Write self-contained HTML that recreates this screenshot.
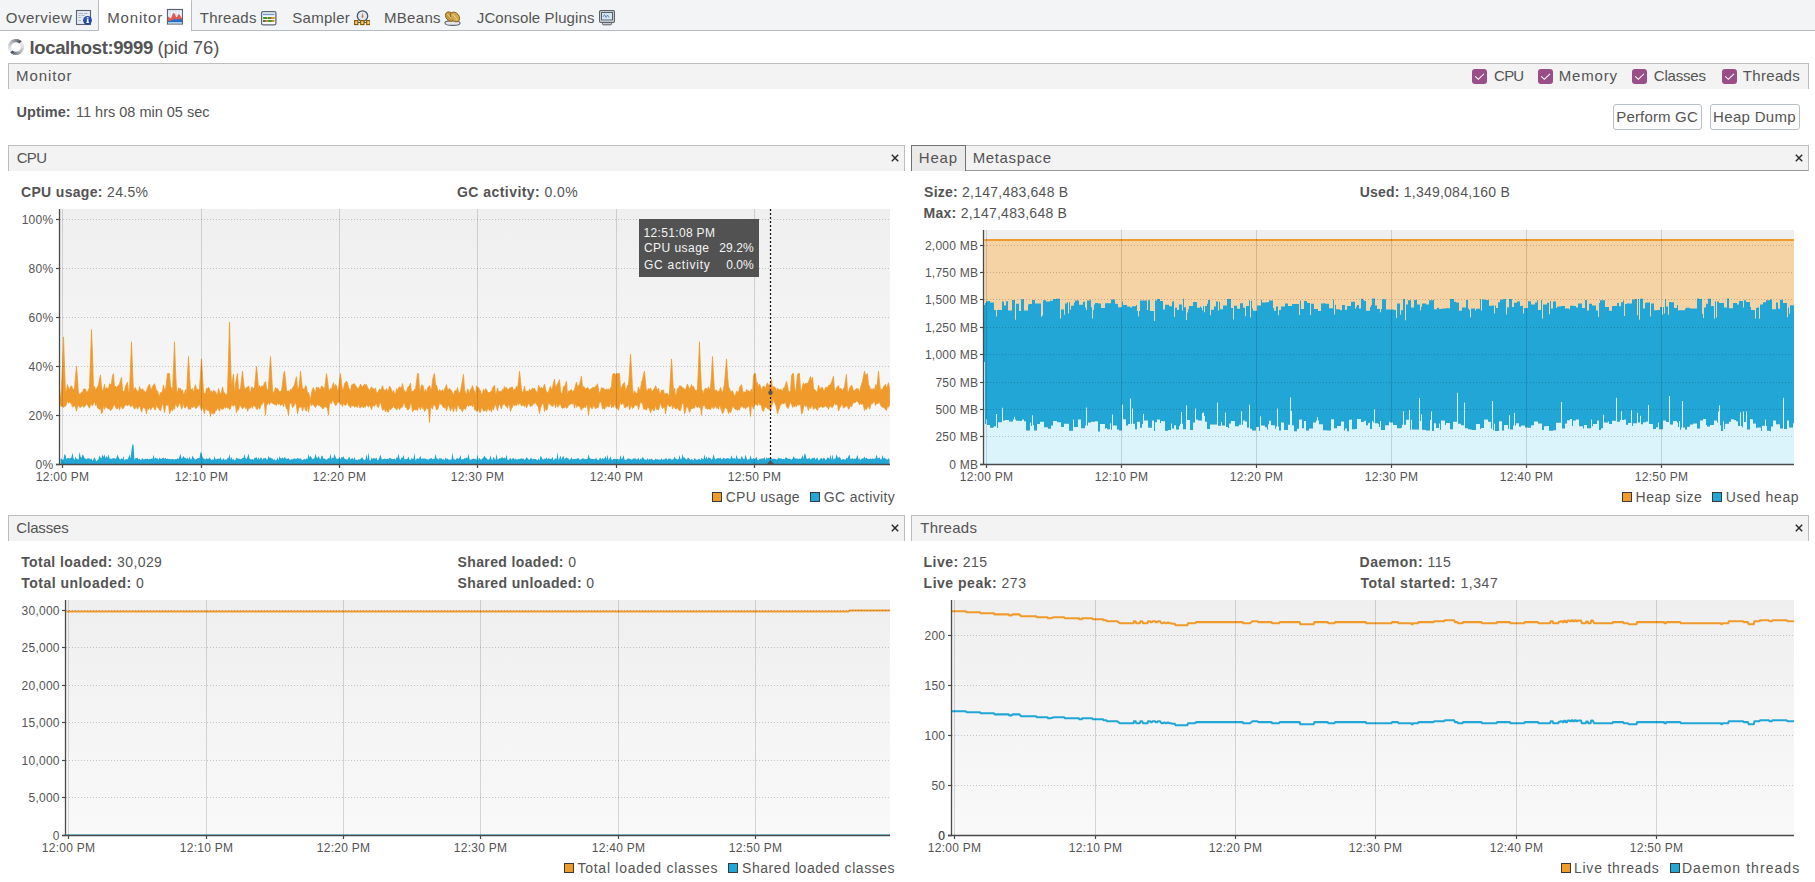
<!DOCTYPE html>
<html><head><meta charset="utf-8"><style>
html,body{margin:0;padding:0;}
body{width:1815px;height:882px;position:relative;overflow:hidden;background:#ffffff;font-family:"Liberation Sans",sans-serif;}
.t{position:absolute;white-space:pre;line-height:1;}
</style></head><body>

<svg style="position:absolute;left:0;top:0" width="1815" height="882" viewBox="0 0 1815 882"><defs><linearGradient id="g1" x1="0" y1="0" x2="0" y2="1"><stop offset="0" stop-color="#efefef"/><stop offset="1" stop-color="#f9f9f9"/></linearGradient></defs><rect x="59" y="209" width="831" height="255" fill="url(#g1)"/><polygon points="60.5,398.1 61.5,387.4 62.5,366.0 63.5,336.9 64.5,366.8 65.5,392.2 66.5,390.4 67.5,384.6 68.5,388.8 69.5,389.3 70.5,386.4 71.5,385.9 72.5,388.4 73.5,389.7 74.5,388.5 75.5,377.2 76.5,366.3 77.5,379.5 78.5,394.2 79.5,394.1 80.5,394.1 81.5,392.1 82.5,392.7 83.5,389.3 84.5,388.8 85.5,389.1 86.5,392.4 87.5,391.5 88.5,390.0 89.5,387.4 90.5,358.7 91.5,329.6 92.5,354.3 93.5,389.8 94.5,386.2 95.5,389.9 96.5,388.6 97.5,387.0 98.5,384.8 99.5,379.4 100.5,374.9 101.5,387.2 102.5,391.4 103.5,389.7 104.5,384.2 105.5,390.7 106.5,387.5 107.5,388.4 108.5,388.6 109.5,383.7 110.5,384.6 111.5,383.5 112.5,375.8 113.5,373.6 114.5,388.4 115.5,386.0 116.5,387.5 117.5,386.8 118.5,384.9 119.5,384.4 120.5,380.5 121.5,377.3 122.5,390.3 123.5,391.7 124.5,391.3 125.5,386.5 126.5,384.1 127.5,382.2 128.5,392.5 129.5,391.5 130.5,367.4 131.5,341.8 132.5,369.5 133.5,391.9 134.5,388.4 135.5,387.6 136.5,391.0 137.5,391.0 138.5,391.8 139.5,386.6 140.5,389.8 141.5,389.8 142.5,388.7 143.5,390.7 144.5,391.2 145.5,391.9 146.5,391.5 147.5,387.7 148.5,385.7 149.5,384.0 150.5,388.9 151.5,389.2 152.5,386.4 153.5,384.9 154.5,383.7 155.5,387.0 156.5,390.9 157.5,390.9 158.5,394.6 159.5,396.4 160.5,392.5 161.5,393.1 162.5,390.4 163.5,384.9 164.5,390.1 165.5,390.1 166.5,382.3 167.5,373.6 168.5,373.6 169.5,373.6 170.5,386.8 171.5,387.4 172.5,391.9 173.5,368.5 174.5,341.8 175.5,369.9 176.5,390.4 177.5,392.7 178.5,387.9 179.5,388.6 180.5,388.6 181.5,390.9 182.5,389.7 183.5,395.0 184.5,393.2 185.5,389.6 186.5,394.9 187.5,375.0 188.5,356.5 189.5,375.0 190.5,390.8 191.5,389.3 192.5,388.4 193.5,393.3 194.5,388.1 195.5,384.8 196.5,389.3 197.5,389.1 198.5,390.2 199.5,388.7 200.5,374.3 201.5,358.9 202.5,376.7 203.5,392.0 204.5,393.6 205.5,393.9 206.5,388.2 207.5,389.2 208.5,387.3 209.5,388.8 210.5,392.5 211.5,390.7 212.5,393.3 213.5,390.6 214.5,391.0 215.5,391.7 216.5,394.4 217.5,395.0 218.5,388.5 219.5,391.9 220.5,394.4 221.5,392.1 222.5,387.0 223.5,391.7 224.5,393.0 225.5,394.0 226.5,396.2 227.5,392.1 228.5,360.4 229.5,322.2 230.5,360.8 231.5,386.6 232.5,379.7 233.5,374.1 234.5,393.7 235.5,384.1 236.5,378.0 237.5,373.6 238.5,390.2 239.5,389.2 240.5,388.4 241.5,379.9 242.5,371.2 243.5,381.5 244.5,389.0 245.5,389.1 246.5,387.6 247.5,387.3 248.5,385.8 249.5,390.5 250.5,392.7 251.5,387.0 252.5,387.4 253.5,388.7 254.5,387.7 255.5,377.7 256.5,366.3 257.5,376.4 258.5,388.3 259.5,385.5 260.5,388.6 261.5,386.0 262.5,386.2 263.5,386.2 264.5,382.4 265.5,381.8 266.5,388.1 267.5,390.9 268.5,387.3 269.5,371.5 270.5,356.5 271.5,372.9 272.5,390.4 273.5,393.6 274.5,390.7 275.5,387.6 276.5,388.4 277.5,388.5 278.5,390.4 279.5,391.8 280.5,391.2 281.5,391.1 282.5,384.2 283.5,374.9 284.5,371.2 285.5,380.3 286.5,390.4 287.5,391.3 288.5,390.7 289.5,392.4 290.5,389.1 291.5,391.0 292.5,387.7 293.5,386.8 294.5,384.8 295.5,380.3 296.5,376.7 297.5,389.3 298.5,388.6 299.5,383.3 300.5,371.2 301.5,381.0 302.5,389.1 303.5,389.1 304.5,389.2 305.5,385.7 306.5,386.8 307.5,393.9 308.5,392.4 309.5,396.2 310.5,399.4 311.5,393.5 312.5,389.3 313.5,387.6 314.5,391.0 315.5,392.6 316.5,386.9 317.5,388.3 318.5,387.2 319.5,389.5 320.5,389.4 321.5,386.0 322.5,386.5 323.5,387.8 324.5,390.1 325.5,381.8 326.5,373.6 327.5,380.3 328.5,389.3 329.5,390.4 330.5,388.4 331.5,390.1 332.5,385.5 333.5,382.7 334.5,387.8 335.5,384.6 336.5,385.6 337.5,391.8 338.5,388.6 339.5,381.3 340.5,373.6 341.5,382.4 342.5,390.0 343.5,389.2 344.5,384.1 345.5,382.5 346.5,381.2 347.5,382.5 348.5,388.1 349.5,388.8 350.5,392.2 351.5,385.0 352.5,384.4 353.5,384.0 354.5,383.8 355.5,385.5 356.5,386.8 357.5,388.6 358.5,388.2 359.5,386.8 360.5,384.1 361.5,386.1 362.5,386.9 363.5,385.7 364.5,384.1 365.5,385.0 366.5,384.6 367.5,387.4 368.5,388.8 369.5,390.8 370.5,388.9 371.5,386.7 372.5,389.0 373.5,388.6 374.5,389.7 375.5,387.9 376.5,393.2 377.5,392.2 378.5,391.3 379.5,389.1 380.5,389.9 381.5,388.5 382.5,385.7 383.5,389.6 384.5,389.9 385.5,390.8 386.5,388.6 387.5,391.2 388.5,390.3 389.5,386.2 390.5,387.6 391.5,389.9 392.5,393.3 393.5,390.4 394.5,393.8 395.5,394.3 396.5,388.7 397.5,390.7 398.5,387.7 399.5,386.8 400.5,387.8 401.5,387.9 402.5,383.5 403.5,389.2 404.5,390.6 405.5,392.5 406.5,391.8 407.5,388.0 408.5,386.6 409.5,385.6 410.5,383.1 411.5,393.2 412.5,391.0 413.5,391.6 414.5,389.2 415.5,389.6 416.5,381.7 417.5,373.6 418.5,373.6 419.5,390.3 420.5,389.7 421.5,385.1 422.5,384.9 423.5,387.2 424.5,393.7 425.5,389.5 426.5,393.1 427.5,388.1 428.5,386.7 429.5,385.5 430.5,388.2 431.5,390.4 432.5,380.7 433.5,375.4 434.5,373.6 435.5,384.3 436.5,385.2 437.5,389.6 438.5,392.1 439.5,389.6 440.5,390.9 441.5,391.2 442.5,389.5 443.5,392.9 444.5,388.7 445.5,387.4 446.5,384.6 447.5,389.7 448.5,389.3 449.5,388.3 450.5,390.1 451.5,390.4 452.5,392.7 453.5,395.8 454.5,391.2 455.5,390.5 456.5,390.9 457.5,387.6 458.5,392.4 459.5,392.9 460.5,390.9 461.5,386.2 462.5,379.7 463.5,374.3 464.5,389.9 465.5,392.5 466.5,394.7 467.5,389.0 468.5,390.1 469.5,394.6 470.5,389.2 471.5,388.2 472.5,385.7 473.5,389.3 474.5,391.4 475.5,394.5 476.5,385.7 477.5,388.0 478.5,387.6 479.5,389.6 480.5,391.0 481.5,394.4 482.5,393.2 483.5,389.3 484.5,391.8 485.5,388.8 486.5,389.5 487.5,391.8 488.5,392.5 489.5,392.6 490.5,391.7 491.5,392.0 492.5,388.1 493.5,386.6 494.5,385.3 495.5,394.6 496.5,392.5 497.5,388.0 498.5,391.9 499.5,391.4 500.5,391.4 501.5,391.7 502.5,389.3 503.5,390.2 504.5,386.4 505.5,389.2 506.5,387.3 507.5,390.1 508.5,389.6 509.5,387.9 510.5,388.1 511.5,387.0 512.5,387.2 513.5,391.2 514.5,389.2 515.5,389.4 516.5,386.3 517.5,389.0 518.5,381.3 519.5,371.2 520.5,380.3 521.5,390.0 522.5,393.0 523.5,391.0 524.5,386.2 525.5,391.8 526.5,391.3 527.5,391.1 528.5,391.7 529.5,389.0 530.5,390.9 531.5,390.0 532.5,387.9 533.5,389.0 534.5,388.0 535.5,391.1 536.5,391.6 537.5,393.6 538.5,385.4 539.5,387.1 540.5,388.7 541.5,387.3 542.5,388.3 543.5,387.4 544.5,384.1 545.5,389.1 546.5,392.1 547.5,392.3 548.5,392.8 549.5,388.6 550.5,386.4 551.5,390.3 552.5,387.7 553.5,383.0 554.5,379.1 555.5,388.0 556.5,385.7 557.5,383.8 558.5,382.2 559.5,379.6 560.5,390.7 561.5,394.1 562.5,392.6 563.5,386.6 564.5,386.8 565.5,384.0 566.5,381.4 567.5,395.0 568.5,391.2 569.5,391.3 570.5,390.1 571.5,389.4 572.5,392.6 573.5,390.6 574.5,390.0 575.5,385.5 576.5,382.0 577.5,386.8 578.5,385.8 579.5,384.6 580.5,380.5 581.5,376.3 582.5,387.4 583.5,386.2 584.5,387.6 585.5,389.3 586.5,388.2 587.5,387.5 588.5,388.6 589.5,390.7 590.5,388.9 591.5,388.8 592.5,387.6 593.5,387.6 594.5,387.8 595.5,386.2 596.5,386.0 597.5,383.8 598.5,390.1 599.5,393.4 600.5,391.0 601.5,387.7 602.5,388.2 603.5,388.0 604.5,389.5 605.5,389.9 606.5,388.9 607.5,389.6 608.5,388.9 609.5,390.7 610.5,387.7 611.5,386.9 612.5,374.6 613.5,373.6 614.5,373.6 615.5,374.4 616.5,373.6 617.5,373.6 618.5,373.6 619.5,373.6 620.5,389.6 621.5,388.1 622.5,384.9 623.5,383.4 624.5,382.3 625.5,390.4 626.5,388.9 627.5,385.3 628.5,384.9 629.5,372.1 630.5,354.1 631.5,369.6 632.5,388.7 633.5,395.0 634.5,390.9 635.5,392.4 636.5,393.6 637.5,392.4 638.5,386.9 639.5,390.4 640.5,389.0 641.5,382.2 642.5,379.6 643.5,374.6 644.5,371.2 645.5,382.6 646.5,391.8 647.5,390.2 648.5,388.5 649.5,389.6 650.5,387.9 651.5,390.7 652.5,391.3 653.5,389.2 654.5,388.7 655.5,385.7 656.5,388.2 657.5,390.5 658.5,388.2 659.5,393.0 660.5,393.7 661.5,390.1 662.5,390.3 663.5,389.9 664.5,394.6 665.5,393.6 666.5,393.6 667.5,393.6 668.5,396.9 669.5,392.7 670.5,375.8 671.5,358.9 672.5,376.2 673.5,391.2 674.5,388.2 675.5,396.3 676.5,393.7 677.5,388.7 678.5,388.5 679.5,385.8 680.5,385.9 681.5,386.4 682.5,387.7 683.5,388.0 684.5,389.0 685.5,390.1 686.5,386.7 687.5,384.0 688.5,387.2 689.5,388.6 690.5,388.1 691.5,384.6 692.5,387.1 693.5,386.3 694.5,389.7 695.5,390.5 696.5,391.0 697.5,388.6 698.5,366.6 699.5,341.8 700.5,369.3 701.5,389.1 702.5,390.7 703.5,394.2 704.5,389.3 705.5,388.3 706.5,388.3 707.5,390.1 708.5,386.8 709.5,390.3 710.5,387.6 711.5,375.3 712.5,356.5 713.5,375.0 714.5,391.3 715.5,390.3 716.5,389.9 717.5,392.3 718.5,391.3 719.5,390.7 720.5,387.5 721.5,390.6 722.5,392.9 723.5,388.8 724.5,383.7 725.5,371.7 726.5,358.9 727.5,375.4 728.5,386.6 729.5,388.6 730.5,391.3 731.5,391.5 732.5,390.7 733.5,393.5 734.5,396.1 735.5,395.2 736.5,391.3 737.5,391.7 738.5,393.1 739.5,387.4 740.5,385.9 741.5,384.6 742.5,390.7 743.5,392.4 744.5,391.8 745.5,393.1 746.5,389.4 747.5,390.7 748.5,390.7 749.5,391.9 750.5,390.9 751.5,389.0 752.5,394.3 753.5,375.6 754.5,373.6 755.5,373.6 756.5,383.8 757.5,382.6 758.5,387.7 759.5,384.1 760.5,386.6 761.5,390.4 762.5,387.4 763.5,386.0 764.5,386.4 765.5,389.1 766.5,385.1 767.5,382.8 768.5,385.5 769.5,384.5 770.5,382.7 771.5,379.0 772.5,390.0 773.5,386.6 774.5,386.9 775.5,387.8 776.5,391.2 777.5,388.3 778.5,389.3 779.5,389.8 780.5,389.3 781.5,389.8 782.5,391.3 783.5,387.9 784.5,387.7 785.5,384.4 786.5,381.3 787.5,386.1 788.5,391.6 789.5,391.5 790.5,392.3 791.5,376.0 792.5,373.6 793.5,373.6 794.5,388.9 795.5,391.7 796.5,384.9 797.5,374.1 798.5,373.6 799.5,373.6 800.5,390.3 801.5,390.2 802.5,386.2 803.5,382.9 804.5,384.6 805.5,383.6 806.5,383.4 807.5,383.3 808.5,382.2 809.5,379.1 810.5,376.5 811.5,380.8 812.5,377.2 813.5,388.1 814.5,389.7 815.5,390.2 816.5,392.3 817.5,391.2 818.5,385.0 819.5,388.2 820.5,388.9 821.5,387.7 822.5,387.2 823.5,390.7 824.5,390.5 825.5,387.6 826.5,387.3 827.5,388.0 828.5,385.6 829.5,385.3 830.5,384.2 831.5,382.5 832.5,379.1 833.5,376.3 834.5,390.8 835.5,390.4 836.5,387.8 837.5,386.4 838.5,385.4 839.5,389.8 840.5,388.1 841.5,389.2 842.5,390.9 843.5,388.0 844.5,387.5 845.5,380.3 846.5,374.4 847.5,392.3 848.5,392.6 849.5,388.4 850.5,386.7 851.5,385.1 852.5,387.2 853.5,391.2 854.5,390.8 855.5,389.4 856.5,388.3 857.5,388.9 858.5,389.0 859.5,392.8 860.5,387.8 861.5,384.2 862.5,381.6 863.5,375.8 864.5,371.2 865.5,375.6 866.5,374.4 867.5,373.6 868.5,386.0 869.5,385.8 870.5,389.9 871.5,389.0 872.5,389.4 873.5,388.3 874.5,391.1 875.5,384.7 876.5,386.6 877.5,382.2 878.5,371.2 879.5,382.4 880.5,390.7 881.5,389.2 882.5,389.5 883.5,387.0 884.5,385.6 885.5,384.4 886.5,388.2 887.5,385.6 888.5,382.7 889.5,388.2 889.5,405.2 888.5,407.3 887.5,406.0 886.5,410.5 885.5,409.3 884.5,408.4 883.5,407.2 882.5,407.3 881.5,406.7 880.5,404.9 879.5,402.3 878.5,402.7 877.5,404.0 876.5,403.0 875.5,405.6 874.5,400.9 873.5,402.3 872.5,403.5 871.5,403.0 870.5,406.3 869.5,409.3 868.5,405.8 867.5,407.2 866.5,409.5 865.5,407.8 864.5,410.6 863.5,405.5 862.5,403.6 861.5,404.5 860.5,403.6 859.5,404.8 858.5,402.6 857.5,401.7 856.5,400.7 855.5,402.6 854.5,402.5 853.5,402.8 852.5,404.1 851.5,407.0 850.5,404.9 849.5,408.3 848.5,409.2 847.5,406.1 846.5,405.9 845.5,406.7 844.5,407.1 843.5,408.2 842.5,404.8 841.5,404.4 840.5,407.0 839.5,407.9 838.5,411.0 837.5,403.7 836.5,404.8 835.5,404.8 834.5,402.2 833.5,405.8 832.5,407.3 831.5,407.2 830.5,405.9 829.5,406.4 828.5,409.4 827.5,407.1 826.5,406.7 825.5,406.0 824.5,406.6 823.5,407.2 822.5,407.4 821.5,406.6 820.5,406.2 819.5,407.8 818.5,406.2 817.5,410.5 816.5,409.5 815.5,407.8 814.5,408.5 813.5,409.2 812.5,405.3 811.5,406.0 810.5,408.6 809.5,405.9 808.5,410.5 807.5,407.8 806.5,404.5 805.5,406.8 804.5,404.0 803.5,407.1 802.5,413.1 801.5,413.8 800.5,404.0 799.5,404.6 798.5,405.3 797.5,403.7 796.5,406.9 795.5,404.8 794.5,406.7 793.5,405.8 792.5,407.4 791.5,403.0 790.5,402.4 789.5,404.0 788.5,408.4 787.5,407.8 786.5,407.0 785.5,401.9 784.5,402.9 783.5,404.0 782.5,402.7 781.5,404.6 780.5,404.2 779.5,407.9 778.5,410.2 777.5,413.8 776.5,408.0 775.5,404.1 774.5,402.5 773.5,399.1 772.5,403.4 771.5,406.1 770.5,411.4 769.5,408.8 768.5,409.2 767.5,408.5 766.5,407.5 765.5,407.1 764.5,408.0 763.5,411.4 762.5,410.6 761.5,406.1 760.5,404.6 759.5,405.0 758.5,401.9 757.5,406.0 756.5,404.6 755.5,404.3 754.5,404.7 753.5,409.1 752.5,406.4 751.5,404.7 750.5,416.5 749.5,407.7 748.5,405.5 747.5,407.2 746.5,406.9 745.5,409.2 744.5,407.2 743.5,408.0 742.5,405.5 741.5,407.1 740.5,406.2 739.5,410.2 738.5,409.1 737.5,410.4 736.5,409.5 735.5,409.4 734.5,408.2 733.5,406.9 732.5,406.1 731.5,410.3 730.5,412.8 729.5,410.8 728.5,413.8 727.5,409.5 726.5,408.4 725.5,407.7 724.5,408.0 723.5,412.1 722.5,413.8 721.5,410.3 720.5,407.8 719.5,404.9 718.5,409.3 717.5,406.7 716.5,408.5 715.5,405.7 714.5,406.9 713.5,409.2 712.5,406.7 711.5,406.8 710.5,409.7 709.5,409.0 708.5,408.4 707.5,409.4 706.5,408.0 705.5,408.4 704.5,404.5 703.5,406.1 702.5,405.4 701.5,415.3 700.5,407.2 699.5,407.7 698.5,405.9 697.5,407.6 696.5,406.7 695.5,404.3 694.5,408.2 693.5,408.0 692.5,408.5 691.5,408.4 690.5,409.8 689.5,412.6 688.5,409.1 687.5,407.1 686.5,406.0 685.5,411.4 684.5,413.8 683.5,403.5 682.5,403.0 681.5,405.7 680.5,410.7 679.5,410.5 678.5,409.9 677.5,407.1 676.5,408.9 675.5,409.0 674.5,406.9 673.5,406.3 672.5,409.0 671.5,403.7 670.5,406.4 669.5,406.7 668.5,405.6 667.5,403.3 666.5,408.3 665.5,413.8 664.5,406.1 663.5,407.8 662.5,408.7 661.5,406.3 660.5,402.3 659.5,406.8 658.5,409.9 657.5,409.3 656.5,409.6 655.5,404.9 654.5,410.4 653.5,410.7 652.5,408.5 651.5,409.6 650.5,412.8 649.5,408.8 648.5,407.9 647.5,407.2 646.5,410.1 645.5,409.2 644.5,409.3 643.5,408.8 642.5,403.3 641.5,403.1 640.5,401.4 639.5,405.7 638.5,409.6 637.5,404.5 636.5,405.8 635.5,404.7 634.5,405.9 633.5,407.8 632.5,408.6 631.5,404.8 630.5,407.4 629.5,409.8 628.5,403.6 627.5,406.8 626.5,406.6 625.5,407.8 624.5,407.4 623.5,403.5 622.5,403.1 621.5,404.8 620.5,401.6 619.5,406.0 618.5,410.3 617.5,408.2 616.5,408.4 615.5,406.7 614.5,403.3 613.5,407.2 612.5,406.6 611.5,407.8 610.5,401.7 609.5,406.5 608.5,407.0 607.5,405.4 606.5,407.0 605.5,406.5 604.5,409.5 603.5,408.1 602.5,408.9 601.5,403.3 600.5,401.9 599.5,401.4 598.5,407.0 597.5,408.2 596.5,407.1 595.5,409.1 594.5,406.4 593.5,405.3 592.5,408.5 591.5,408.4 590.5,406.6 589.5,406.8 588.5,415.3 587.5,405.7 586.5,404.5 585.5,408.0 584.5,406.0 583.5,408.1 582.5,407.6 581.5,410.3 580.5,408.1 579.5,405.9 578.5,406.2 577.5,405.6 576.5,407.4 575.5,402.4 574.5,408.2 573.5,402.8 572.5,404.1 571.5,403.7 570.5,404.1 569.5,404.8 568.5,405.4 567.5,407.4 566.5,408.4 565.5,405.5 564.5,407.9 563.5,407.7 562.5,408.4 561.5,407.3 560.5,404.1 559.5,404.0 558.5,406.4 557.5,407.1 556.5,402.4 555.5,407.8 554.5,402.2 553.5,405.2 552.5,406.4 551.5,405.8 550.5,405.1 549.5,403.7 548.5,402.3 547.5,408.5 546.5,410.4 545.5,407.7 544.5,411.5 543.5,403.4 542.5,403.6 541.5,405.3 540.5,408.0 539.5,413.5 538.5,407.5 537.5,405.8 536.5,404.5 535.5,402.1 534.5,403.7 533.5,403.1 532.5,405.8 531.5,405.4 530.5,406.8 529.5,404.3 528.5,403.0 527.5,405.4 526.5,408.0 525.5,404.0 524.5,406.8 523.5,404.9 522.5,405.2 521.5,406.2 520.5,403.8 519.5,402.9 518.5,404.7 517.5,402.8 516.5,405.8 515.5,404.7 514.5,406.0 513.5,403.4 512.5,407.1 511.5,408.1 510.5,411.5 509.5,405.5 508.5,404.2 507.5,408.4 506.5,406.2 505.5,405.9 504.5,403.5 503.5,404.6 502.5,404.4 501.5,408.9 500.5,406.6 499.5,403.5 498.5,405.8 497.5,410.7 496.5,407.3 495.5,404.5 494.5,405.8 493.5,409.9 492.5,406.7 491.5,412.0 490.5,409.5 489.5,410.6 488.5,407.6 487.5,409.2 486.5,411.8 485.5,409.5 484.5,410.9 483.5,411.1 482.5,408.6 481.5,407.2 480.5,412.2 479.5,412.2 478.5,408.5 477.5,410.9 476.5,411.3 475.5,410.1 474.5,409.5 473.5,403.2 472.5,406.9 471.5,404.4 470.5,405.9 469.5,404.9 468.5,406.5 467.5,404.6 466.5,406.3 465.5,409.4 464.5,408.6 463.5,408.7 462.5,411.5 461.5,410.6 460.5,408.3 459.5,408.5 458.5,405.5 457.5,405.1 456.5,411.6 455.5,407.2 454.5,407.4 453.5,412.0 452.5,407.8 451.5,408.0 450.5,411.1 449.5,407.4 448.5,404.5 447.5,407.5 446.5,410.9 445.5,406.5 444.5,408.0 443.5,407.5 442.5,406.1 441.5,403.7 440.5,404.3 439.5,402.6 438.5,407.5 437.5,409.5 436.5,409.9 435.5,406.1 434.5,405.5 433.5,404.1 432.5,409.3 431.5,406.8 430.5,408.5 429.5,422.6 428.5,407.8 427.5,409.3 426.5,407.1 425.5,410.3 424.5,411.5 423.5,407.8 422.5,408.5 421.5,405.6 420.5,409.9 419.5,407.3 418.5,406.8 417.5,410.6 416.5,409.7 415.5,409.9 414.5,409.3 413.5,410.6 412.5,411.7 411.5,404.2 410.5,402.9 409.5,408.3 408.5,409.5 407.5,409.9 406.5,407.4 405.5,407.4 404.5,403.3 403.5,403.3 402.5,407.0 401.5,407.4 400.5,408.1 399.5,409.6 398.5,407.4 397.5,408.0 396.5,410.1 395.5,407.9 394.5,408.0 393.5,404.9 392.5,407.5 391.5,408.6 390.5,410.0 389.5,407.8 388.5,412.1 387.5,411.9 386.5,408.9 385.5,411.9 384.5,408.6 383.5,409.6 382.5,410.3 381.5,405.9 380.5,402.0 379.5,403.6 378.5,407.6 377.5,407.0 376.5,403.2 375.5,404.4 374.5,406.4 373.5,405.4 372.5,405.9 371.5,409.6 370.5,406.4 369.5,405.3 368.5,407.0 367.5,406.1 366.5,404.3 365.5,407.1 364.5,406.4 363.5,408.0 362.5,406.2 361.5,406.8 360.5,407.7 359.5,407.4 358.5,403.2 357.5,407.5 356.5,406.6 355.5,406.3 354.5,407.2 353.5,405.2 352.5,406.2 351.5,405.1 350.5,407.9 349.5,405.5 348.5,405.8 347.5,401.6 346.5,404.1 345.5,405.5 344.5,404.9 343.5,402.6 342.5,406.6 341.5,403.8 340.5,404.7 339.5,401.5 338.5,402.7 337.5,401.8 336.5,405.1 335.5,405.5 334.5,403.7 333.5,401.5 332.5,399.7 331.5,403.7 330.5,403.1 329.5,401.9 328.5,415.3 327.5,408.6 326.5,407.8 325.5,406.7 324.5,406.6 323.5,408.4 322.5,408.7 321.5,406.8 320.5,406.7 319.5,405.1 318.5,405.6 317.5,403.8 316.5,405.8 315.5,407.5 314.5,406.2 313.5,405.0 312.5,403.7 311.5,406.0 310.5,401.7 309.5,406.9 308.5,412.2 307.5,404.4 306.5,411.0 305.5,410.5 304.5,406.0 303.5,407.4 302.5,411.1 301.5,406.5 300.5,407.1 299.5,406.9 298.5,409.1 297.5,413.8 296.5,406.3 295.5,401.8 294.5,404.4 293.5,406.6 292.5,407.6 291.5,403.3 290.5,403.2 289.5,403.8 288.5,415.3 287.5,408.9 286.5,408.7 285.5,405.2 284.5,401.4 283.5,406.9 282.5,403.8 281.5,404.4 280.5,405.5 279.5,403.2 278.5,404.4 277.5,402.4 276.5,405.4 275.5,404.5 274.5,404.5 273.5,403.9 272.5,403.2 271.5,402.8 270.5,401.8 269.5,404.5 268.5,401.8 267.5,404.5 266.5,404.6 265.5,415.3 264.5,403.8 263.5,400.7 262.5,404.1 261.5,403.9 260.5,406.9 259.5,409.3 258.5,406.1 257.5,409.3 256.5,409.3 255.5,406.6 254.5,406.2 253.5,405.1 252.5,408.3 251.5,405.6 250.5,408.1 249.5,408.2 248.5,408.6 247.5,411.3 246.5,406.8 245.5,408.5 244.5,406.3 243.5,407.5 242.5,409.0 241.5,407.0 240.5,405.2 239.5,405.5 238.5,410.0 237.5,409.5 236.5,412.7 235.5,405.5 234.5,404.4 233.5,406.3 232.5,405.4 231.5,404.4 230.5,408.7 229.5,409.7 228.5,407.3 227.5,408.2 226.5,406.6 225.5,408.4 224.5,406.3 223.5,408.9 222.5,409.3 221.5,409.1 220.5,407.1 219.5,411.3 218.5,409.0 217.5,407.6 216.5,410.5 215.5,410.1 214.5,413.5 213.5,413.8 212.5,413.8 211.5,411.5 210.5,416.5 209.5,411.1 208.5,410.6 207.5,410.3 206.5,409.7 205.5,407.1 204.5,413.8 203.5,410.1 202.5,407.1 201.5,410.5 200.5,407.3 199.5,404.1 198.5,405.7 197.5,406.8 196.5,408.1 195.5,408.5 194.5,406.1 193.5,406.1 192.5,407.7 191.5,406.6 190.5,409.3 189.5,409.0 188.5,409.3 187.5,405.7 186.5,405.7 185.5,407.8 184.5,407.9 183.5,403.0 182.5,407.3 181.5,409.2 180.5,404.2 179.5,402.6 178.5,405.6 177.5,407.5 176.5,405.4 175.5,403.7 174.5,409.4 173.5,407.5 172.5,411.1 171.5,408.8 170.5,411.2 169.5,413.8 168.5,404.2 167.5,405.5 166.5,404.2 165.5,406.9 164.5,412.7 163.5,406.2 162.5,403.1 161.5,407.0 160.5,411.0 159.5,409.7 158.5,407.9 157.5,407.6 156.5,403.9 155.5,410.0 154.5,409.4 153.5,406.5 152.5,407.0 151.5,408.5 150.5,409.9 149.5,406.8 148.5,409.7 147.5,407.7 146.5,413.8 145.5,409.0 144.5,408.1 143.5,407.6 142.5,408.7 141.5,412.1 140.5,408.0 139.5,405.9 138.5,406.9 137.5,409.2 136.5,406.5 135.5,407.9 134.5,409.2 133.5,407.1 132.5,405.3 131.5,405.2 130.5,407.0 129.5,404.4 128.5,404.6 127.5,406.0 126.5,404.8 125.5,405.3 124.5,405.7 123.5,408.2 122.5,408.9 121.5,406.6 120.5,406.1 119.5,410.2 118.5,406.1 117.5,408.6 116.5,408.9 115.5,407.0 114.5,404.0 113.5,405.7 112.5,408.0 111.5,409.8 110.5,410.6 109.5,408.8 108.5,408.6 107.5,408.3 106.5,407.7 105.5,406.0 104.5,409.3 103.5,405.2 102.5,411.8 101.5,413.8 100.5,407.8 99.5,409.4 98.5,408.6 97.5,407.9 96.5,403.6 95.5,405.5 94.5,401.5 93.5,403.2 92.5,406.0 91.5,403.9 90.5,405.0 89.5,408.2 88.5,406.6 87.5,404.8 86.5,403.9 85.5,404.9 84.5,407.0 83.5,407.2 82.5,404.7 81.5,406.7 80.5,407.3 79.5,407.2 78.5,405.4 77.5,406.4 76.5,411.2 75.5,406.8 74.5,406.0 73.5,406.2 72.5,407.1 71.5,404.1 70.5,402.9 69.5,402.1 68.5,403.2 67.5,400.6 66.5,404.3 65.5,406.3 64.5,406.2 63.5,407.6 62.5,406.5 61.5,406.5 60.5,405.5" fill="#f09a2c" stroke="#f09a2c" stroke-width="0.8" stroke-linejoin="round"/><polygon points="60.5,464.3 60.5,458.7 61.5,458.6 62.5,459.9 63.5,459.4 64.5,454.0 65.5,455.0 66.5,459.2 67.5,457.9 68.5,458.1 69.5,458.6 70.5,457.9 71.5,457.2 72.5,452.7 73.5,458.2 74.5,459.9 75.5,456.4 76.5,458.7 77.5,459.0 78.5,459.7 79.5,452.1 80.5,456.5 81.5,458.0 82.5,454.5 83.5,455.5 84.5,458.2 85.5,458.5 86.5,459.4 87.5,458.3 88.5,458.3 89.5,458.4 90.5,459.5 91.5,458.3 92.5,461.0 93.5,459.3 94.5,457.3 95.5,459.2 96.5,461.4 97.5,459.9 98.5,459.3 99.5,455.5 100.5,457.6 101.5,458.5 102.5,454.2 103.5,457.2 104.5,454.2 105.5,458.4 106.5,456.0 107.5,457.9 108.5,453.9 109.5,458.8 110.5,458.6 111.5,459.1 112.5,458.5 113.5,458.0 114.5,458.3 115.5,458.9 116.5,457.9 117.5,454.2 118.5,456.9 119.5,459.0 120.5,459.6 121.5,458.3 122.5,459.2 123.5,456.1 124.5,460.5 125.5,459.3 126.5,459.0 127.5,459.4 128.5,457.5 129.5,454.4 130.5,458.6 131.5,450.1 132.5,444.0 133.5,444.9 134.5,460.0 135.5,457.9 136.5,458.2 137.5,457.8 138.5,459.5 139.5,458.5 140.5,459.9 141.5,459.4 142.5,458.1 143.5,459.6 144.5,459.3 145.5,458.8 146.5,459.1 147.5,458.5 148.5,459.4 149.5,458.9 150.5,458.9 151.5,458.5 152.5,459.0 153.5,454.7 154.5,459.1 155.5,457.5 156.5,458.6 157.5,458.2 158.5,459.7 159.5,457.6 160.5,458.8 161.5,459.1 162.5,457.9 163.5,457.8 164.5,458.9 165.5,457.7 166.5,459.3 167.5,458.4 168.5,459.3 169.5,458.7 170.5,459.5 171.5,458.9 172.5,459.0 173.5,459.2 174.5,459.6 175.5,459.1 176.5,459.3 177.5,458.2 178.5,459.1 179.5,456.8 180.5,453.5 181.5,458.9 182.5,457.8 183.5,455.9 184.5,457.8 185.5,458.0 186.5,459.0 187.5,457.7 188.5,459.5 189.5,456.2 190.5,459.1 191.5,459.4 192.5,455.5 193.5,457.6 194.5,458.9 195.5,459.4 196.5,459.0 197.5,458.2 198.5,457.9 199.5,458.2 200.5,452.1 201.5,453.0 202.5,457.3 203.5,458.6 204.5,458.8 205.5,459.6 206.5,458.1 207.5,459.0 208.5,459.0 209.5,457.4 210.5,458.8 211.5,460.3 212.5,459.3 213.5,460.0 214.5,456.0 215.5,459.2 216.5,459.2 217.5,458.6 218.5,458.7 219.5,458.9 220.5,457.1 221.5,459.7 222.5,459.7 223.5,458.0 224.5,460.0 225.5,459.2 226.5,459.9 227.5,458.1 228.5,458.3 229.5,454.0 230.5,459.5 231.5,457.0 232.5,460.0 233.5,458.6 234.5,460.6 235.5,459.8 236.5,457.4 237.5,458.6 238.5,458.8 239.5,458.8 240.5,459.2 241.5,458.9 242.5,458.0 243.5,457.9 244.5,453.8 245.5,458.3 246.5,459.1 247.5,456.9 248.5,453.5 249.5,458.4 250.5,459.2 251.5,459.4 252.5,459.1 253.5,460.1 254.5,458.1 255.5,457.7 256.5,457.1 257.5,459.4 258.5,457.2 259.5,459.8 260.5,457.5 261.5,457.8 262.5,460.0 263.5,458.0 264.5,458.5 265.5,457.6 266.5,459.5 267.5,459.5 268.5,455.7 269.5,457.9 270.5,457.4 271.5,458.5 272.5,458.5 273.5,460.1 274.5,459.1 275.5,460.5 276.5,459.9 277.5,457.4 278.5,460.2 279.5,456.0 280.5,458.3 281.5,458.6 282.5,457.6 283.5,458.7 284.5,456.9 285.5,457.9 286.5,458.9 287.5,458.7 288.5,458.0 289.5,459.4 290.5,459.9 291.5,459.0 292.5,459.4 293.5,458.4 294.5,458.6 295.5,458.7 296.5,458.9 297.5,457.8 298.5,458.5 299.5,458.8 300.5,458.2 301.5,459.4 302.5,460.3 303.5,459.5 304.5,458.8 305.5,459.7 306.5,458.2 307.5,459.3 308.5,453.8 309.5,457.8 310.5,455.8 311.5,457.5 312.5,459.3 313.5,458.7 314.5,458.0 315.5,453.4 316.5,457.3 317.5,458.5 318.5,455.7 319.5,458.2 320.5,459.4 321.5,455.4 322.5,456.0 323.5,458.9 324.5,458.3 325.5,459.3 326.5,460.0 327.5,458.7 328.5,458.0 329.5,458.5 330.5,453.4 331.5,459.1 332.5,457.7 333.5,458.1 334.5,453.8 335.5,457.1 336.5,458.7 337.5,459.1 338.5,458.5 339.5,456.8 340.5,459.4 341.5,457.0 342.5,457.6 343.5,456.3 344.5,458.7 345.5,459.0 346.5,459.6 347.5,459.4 348.5,457.8 349.5,456.7 350.5,459.8 351.5,458.6 352.5,458.1 353.5,459.7 354.5,457.0 355.5,460.1 356.5,459.7 357.5,459.9 358.5,459.2 359.5,459.6 360.5,459.0 361.5,457.7 362.5,457.5 363.5,459.4 364.5,460.2 365.5,459.2 366.5,454.1 367.5,459.7 368.5,452.2 369.5,459.9 370.5,460.8 371.5,457.2 372.5,459.2 373.5,458.1 374.5,458.3 375.5,458.8 376.5,457.4 377.5,460.4 378.5,459.6 379.5,457.5 380.5,454.6 381.5,458.8 382.5,459.5 383.5,459.1 384.5,458.6 385.5,459.0 386.5,459.3 387.5,458.8 388.5,459.3 389.5,457.8 390.5,458.2 391.5,458.8 392.5,459.2 393.5,459.1 394.5,458.6 395.5,459.9 396.5,457.3 397.5,458.1 398.5,453.6 399.5,458.5 400.5,460.0 401.5,457.3 402.5,458.2 403.5,454.7 404.5,459.6 405.5,459.1 406.5,459.3 407.5,458.8 408.5,456.4 409.5,459.5 410.5,460.0 411.5,458.1 412.5,458.7 413.5,458.9 414.5,453.1 415.5,460.6 416.5,458.7 417.5,458.3 418.5,459.1 419.5,458.0 420.5,455.9 421.5,459.2 422.5,458.5 423.5,458.4 424.5,458.6 425.5,458.8 426.5,459.3 427.5,459.3 428.5,459.8 429.5,458.7 430.5,458.4 431.5,457.9 432.5,459.3 433.5,458.7 434.5,459.0 435.5,453.7 436.5,457.9 437.5,458.7 438.5,459.8 439.5,458.1 440.5,458.4 441.5,458.3 442.5,459.8 443.5,458.9 444.5,460.3 445.5,457.5 446.5,459.1 447.5,458.6 448.5,459.5 449.5,459.7 450.5,459.6 451.5,459.6 452.5,452.5 453.5,458.9 454.5,459.3 455.5,460.1 456.5,458.4 457.5,458.0 458.5,458.9 459.5,457.9 460.5,455.1 461.5,460.1 462.5,458.9 463.5,459.3 464.5,457.9 465.5,458.4 466.5,457.6 467.5,458.5 468.5,453.6 469.5,459.5 470.5,459.7 471.5,459.2 472.5,459.0 473.5,458.4 474.5,458.9 475.5,458.7 476.5,459.9 477.5,454.5 478.5,460.1 479.5,457.8 480.5,459.5 481.5,459.4 482.5,458.2 483.5,457.4 484.5,455.4 485.5,457.8 486.5,458.0 487.5,459.4 488.5,459.4 489.5,459.2 490.5,455.2 491.5,459.2 492.5,460.0 493.5,456.7 494.5,458.4 495.5,460.1 496.5,453.8 497.5,459.4 498.5,459.3 499.5,457.9 500.5,458.6 501.5,457.5 502.5,457.3 503.5,458.4 504.5,457.4 505.5,458.8 506.5,454.6 507.5,459.7 508.5,460.1 509.5,459.0 510.5,457.7 511.5,459.8 512.5,458.4 513.5,457.8 514.5,459.6 515.5,458.6 516.5,459.4 517.5,459.5 518.5,458.8 519.5,459.3 520.5,458.8 521.5,458.2 522.5,458.7 523.5,458.4 524.5,460.0 525.5,459.0 526.5,457.2 527.5,458.1 528.5,459.6 529.5,459.7 530.5,458.3 531.5,458.3 532.5,459.6 533.5,458.7 534.5,458.9 535.5,458.9 536.5,459.4 537.5,460.4 538.5,458.3 539.5,460.4 540.5,455.7 541.5,457.0 542.5,459.2 543.5,459.4 544.5,458.5 545.5,459.1 546.5,457.2 547.5,459.5 548.5,458.1 549.5,458.7 550.5,459.0 551.5,458.9 552.5,456.8 553.5,460.6 554.5,459.3 555.5,458.3 556.5,459.4 557.5,452.1 558.5,459.9 559.5,458.2 560.5,455.5 561.5,459.7 562.5,457.0 563.5,455.9 564.5,459.5 565.5,457.9 566.5,457.5 567.5,458.3 568.5,458.6 569.5,460.1 570.5,459.0 571.5,457.3 572.5,459.4 573.5,459.1 574.5,458.9 575.5,458.9 576.5,458.8 577.5,458.4 578.5,458.1 579.5,459.4 580.5,459.7 581.5,459.0 582.5,458.3 583.5,458.5 584.5,458.9 585.5,459.2 586.5,459.1 587.5,458.9 588.5,454.0 589.5,458.0 590.5,458.6 591.5,458.9 592.5,459.1 593.5,459.0 594.5,459.2 595.5,458.6 596.5,458.2 597.5,459.8 598.5,460.3 599.5,458.4 600.5,457.8 601.5,459.8 602.5,457.8 603.5,458.9 604.5,458.5 605.5,455.7 606.5,459.4 607.5,454.6 608.5,459.9 609.5,458.6 610.5,456.3 611.5,459.6 612.5,460.0 613.5,458.8 614.5,458.7 615.5,458.9 616.5,459.2 617.5,458.4 618.5,459.4 619.5,459.5 620.5,455.3 621.5,458.9 622.5,458.2 623.5,455.1 624.5,459.5 625.5,460.1 626.5,459.4 627.5,458.4 628.5,458.6 629.5,458.7 630.5,458.9 631.5,459.7 632.5,459.2 633.5,458.3 634.5,458.4 635.5,458.6 636.5,459.4 637.5,459.3 638.5,457.8 639.5,460.2 640.5,458.5 641.5,459.3 642.5,457.1 643.5,458.1 644.5,459.6 645.5,459.4 646.5,460.0 647.5,457.9 648.5,460.0 649.5,458.8 650.5,459.6 651.5,458.5 652.5,459.6 653.5,460.2 654.5,460.0 655.5,458.5 656.5,459.4 657.5,458.9 658.5,459.7 659.5,459.5 660.5,460.0 661.5,457.9 662.5,460.1 663.5,459.3 664.5,459.6 665.5,458.2 666.5,458.2 667.5,460.1 668.5,458.4 669.5,458.7 670.5,458.5 671.5,459.7 672.5,459.5 673.5,459.3 674.5,456.6 675.5,458.4 676.5,459.0 677.5,459.6 678.5,459.2 679.5,454.9 680.5,459.1 681.5,459.3 682.5,453.7 683.5,457.8 684.5,457.4 685.5,458.7 686.5,459.8 687.5,458.2 688.5,457.8 689.5,459.1 690.5,460.0 691.5,459.0 692.5,459.4 693.5,460.6 694.5,458.1 695.5,459.1 696.5,459.8 697.5,459.8 698.5,459.0 699.5,458.7 700.5,460.2 701.5,457.7 702.5,458.7 703.5,459.6 704.5,454.3 705.5,459.2 706.5,456.3 707.5,459.5 708.5,456.9 709.5,458.0 710.5,458.2 711.5,459.7 712.5,458.8 713.5,454.0 714.5,457.7 715.5,459.4 716.5,458.5 717.5,458.2 718.5,458.1 719.5,458.4 720.5,457.6 721.5,459.6 722.5,459.0 723.5,457.4 724.5,458.5 725.5,458.8 726.5,458.4 727.5,457.9 728.5,458.3 729.5,459.0 730.5,458.4 731.5,455.2 732.5,458.5 733.5,458.4 734.5,457.9 735.5,459.2 736.5,454.7 737.5,458.3 738.5,458.9 739.5,458.4 740.5,459.3 741.5,456.0 742.5,457.4 743.5,459.0 744.5,459.1 745.5,454.5 746.5,458.0 747.5,460.1 748.5,459.3 749.5,459.2 750.5,455.2 751.5,458.7 752.5,459.0 753.5,457.7 754.5,459.1 755.5,458.4 756.5,456.7 757.5,459.9 758.5,460.2 759.5,458.9 760.5,458.8 761.5,458.7 762.5,458.4 763.5,458.5 764.5,456.9 765.5,460.2 766.5,457.1 767.5,458.8 768.5,457.8 769.5,458.2 770.5,458.1 771.5,458.3 772.5,459.0 773.5,458.8 774.5,458.8 775.5,459.0 776.5,459.7 777.5,458.9 778.5,457.8 779.5,458.5 780.5,458.3 781.5,458.4 782.5,459.3 783.5,458.8 784.5,459.5 785.5,457.6 786.5,457.6 787.5,458.5 788.5,458.8 789.5,458.8 790.5,459.1 791.5,459.8 792.5,458.7 793.5,456.2 794.5,458.0 795.5,458.4 796.5,458.6 797.5,458.4 798.5,458.9 799.5,458.6 800.5,459.0 801.5,457.9 802.5,455.0 803.5,459.1 804.5,453.5 805.5,454.4 806.5,458.5 807.5,459.0 808.5,458.4 809.5,457.7 810.5,459.7 811.5,458.4 812.5,458.0 813.5,458.2 814.5,457.2 815.5,459.8 816.5,458.2 817.5,457.6 818.5,460.4 819.5,459.8 820.5,458.5 821.5,457.7 822.5,459.4 823.5,457.7 824.5,458.0 825.5,460.0 826.5,459.4 827.5,457.2 828.5,457.9 829.5,459.1 830.5,454.5 831.5,459.9 832.5,454.2 833.5,459.8 834.5,458.3 835.5,458.8 836.5,454.1 837.5,457.3 838.5,458.1 839.5,456.8 840.5,458.3 841.5,460.0 842.5,459.3 843.5,458.9 844.5,459.4 845.5,459.8 846.5,457.5 847.5,458.7 848.5,456.0 849.5,454.6 850.5,459.2 851.5,458.8 852.5,458.0 853.5,459.2 854.5,458.4 855.5,459.1 856.5,457.5 857.5,454.8 858.5,459.6 859.5,458.6 860.5,460.2 861.5,458.8 862.5,458.5 863.5,458.3 864.5,456.6 865.5,458.8 866.5,457.4 867.5,458.9 868.5,458.7 869.5,459.2 870.5,458.3 871.5,459.3 872.5,458.3 873.5,458.9 874.5,458.6 875.5,458.6 876.5,454.2 877.5,458.3 878.5,458.2 879.5,457.3 880.5,459.5 881.5,459.2 882.5,455.1 883.5,458.8 884.5,457.6 885.5,458.8 886.5,459.2 887.5,459.8 888.5,457.9 889.5,459.5 889.5,464.3" fill="#22a6d6"/><line x1="60" y1="219.5" x2="890" y2="219.5" stroke="rgba(0,0,0,0.2)" stroke-width="1" stroke-dasharray="1 2"/><line x1="60" y1="268.5" x2="890" y2="268.5" stroke="rgba(0,0,0,0.2)" stroke-width="1" stroke-dasharray="1 2"/><line x1="60" y1="317.5" x2="890" y2="317.5" stroke="rgba(0,0,0,0.2)" stroke-width="1" stroke-dasharray="1 2"/><line x1="60" y1="366.5" x2="890" y2="366.5" stroke="rgba(0,0,0,0.2)" stroke-width="1" stroke-dasharray="1 2"/><line x1="60" y1="415.5" x2="890" y2="415.5" stroke="rgba(0,0,0,0.2)" stroke-width="1" stroke-dasharray="1 2"/><line x1="62.5" y1="209" x2="62.5" y2="464" stroke="rgba(0,0,0,0.14)" stroke-width="1"/><line x1="201.5" y1="209" x2="201.5" y2="464" stroke="rgba(0,0,0,0.14)" stroke-width="1"/><line x1="339.5" y1="209" x2="339.5" y2="464" stroke="rgba(0,0,0,0.14)" stroke-width="1"/><line x1="477.5" y1="209" x2="477.5" y2="464" stroke="rgba(0,0,0,0.14)" stroke-width="1"/><line x1="616.5" y1="209" x2="616.5" y2="464" stroke="rgba(0,0,0,0.14)" stroke-width="1"/><line x1="754.5" y1="209" x2="754.5" y2="464" stroke="rgba(0,0,0,0.14)" stroke-width="1"/><line x1="770.5" y1="209" x2="770.5" y2="464" stroke="#111" stroke-width="1.2" stroke-dasharray="2 2"/><circle cx="770.5" cy="392.8" r="2.2" fill="#555"/><path d="M767 464 L770.5 460 L774 464Z" fill="#555"/><line x1="59.5" y1="209" x2="59.5" y2="465" stroke="#4a4a4a" stroke-width="1.3"/><line x1="56" y1="464.5" x2="890" y2="464.5" stroke="#4a4a4a" stroke-width="1.3"/><line x1="56" y1="219.5" x2="60" y2="219.5" stroke="#4a4a4a" stroke-width="1.2"/><line x1="56" y1="268.5" x2="60" y2="268.5" stroke="#4a4a4a" stroke-width="1.2"/><line x1="56" y1="317.5" x2="60" y2="317.5" stroke="#4a4a4a" stroke-width="1.2"/><line x1="56" y1="366.5" x2="60" y2="366.5" stroke="#4a4a4a" stroke-width="1.2"/><line x1="56" y1="415.5" x2="60" y2="415.5" stroke="#4a4a4a" stroke-width="1.2"/><line x1="56" y1="464.5" x2="60" y2="464.5" stroke="#4a4a4a" stroke-width="1.2"/><line x1="62.5" y1="464" x2="62.5" y2="468" stroke="#4a4a4a" stroke-width="1.2"/><line x1="201.5" y1="464" x2="201.5" y2="468" stroke="#4a4a4a" stroke-width="1.2"/><line x1="339.5" y1="464" x2="339.5" y2="468" stroke="#4a4a4a" stroke-width="1.2"/><line x1="477.5" y1="464" x2="477.5" y2="468" stroke="#4a4a4a" stroke-width="1.2"/><line x1="616.5" y1="464" x2="616.5" y2="468" stroke="#4a4a4a" stroke-width="1.2"/><line x1="754.5" y1="464" x2="754.5" y2="468" stroke="#4a4a4a" stroke-width="1.2"/><defs><linearGradient id="g2" x1="0" y1="0" x2="0" y2="1"><stop offset="0" stop-color="#efefef"/><stop offset="1" stop-color="#f9f9f9"/></linearGradient></defs><rect x="983" y="230" width="811" height="234" fill="url(#g2)"/><rect x="984.5" y="239.9" width="809.5" height="224.4" fill="#f6d3a5"/><polygon points="984,464.3 984,362.0 984,362.0 985,362.0 985,424.0 986,424.0 986,419.3 987,419.3 987,425.0 988,425.0 988,425.0 989,425.0 989,425.0 990,425.0 990,427.7 991,427.7 991,427.7 992,427.7 992,427.7 993,427.7 993,427.3 994,427.3 994,426.3 995,426.3 995,426.3 996,426.3 996,414.0 997,414.0 997,427.9 998,427.9 998,422.2 999,422.2 999,422.2 1000,422.2 1000,422.2 1001,422.2 1001,422.2 1002,422.2 1002,407.7 1003,407.7 1003,420.4 1004,420.4 1004,420.4 1005,420.4 1005,420.1 1006,420.1 1006,420.1 1007,420.1 1007,420.1 1008,420.1 1008,420.1 1009,420.1 1009,421.5 1010,421.5 1010,421.5 1011,421.5 1011,421.5 1012,421.5 1012,421.5 1013,421.5 1013,419.6 1014,419.6 1014,416.7 1015,416.7 1015,419.6 1016,419.6 1016,420.8 1017,420.8 1017,420.8 1018,420.8 1018,420.8 1019,420.8 1019,420.8 1020,420.8 1020,420.9 1021,420.9 1021,420.9 1022,420.9 1022,419.5 1023,419.5 1023,419.5 1024,419.5 1024,421.2 1025,421.2 1025,421.2 1026,421.2 1026,430.4 1027,430.4 1027,430.4 1028,430.4 1028,430.4 1029,430.4 1029,430.4 1030,430.4 1030,422.4 1031,422.4 1031,426.1 1032,426.1 1032,415.3 1033,415.3 1033,425.1 1034,425.1 1034,430.6 1035,430.6 1035,430.6 1036,430.6 1036,430.6 1037,430.6 1037,424.1 1038,424.1 1038,424.1 1039,424.1 1039,424.1 1040,424.1 1040,421.7 1041,421.7 1041,421.7 1042,421.7 1042,421.7 1043,421.7 1043,421.7 1044,421.7 1044,427.2 1045,427.2 1045,427.2 1046,427.2 1046,427.2 1047,427.2 1047,427.2 1048,427.2 1048,428.7 1049,428.7 1049,428.7 1050,428.7 1050,428.7 1051,428.7 1051,425.5 1052,425.5 1052,425.5 1053,425.5 1053,420.9 1054,420.9 1054,420.9 1055,420.9 1055,420.9 1056,420.9 1056,420.9 1057,420.9 1057,422.3 1058,422.3 1058,422.3 1059,422.3 1059,422.3 1060,422.3 1060,422.3 1061,422.3 1061,426.9 1062,426.9 1062,426.9 1063,426.9 1063,426.9 1064,426.9 1064,423.7 1065,423.7 1065,423.7 1066,423.7 1066,423.7 1067,423.7 1067,423.7 1068,423.7 1068,423.7 1069,423.7 1069,430.7 1070,430.7 1070,430.7 1071,430.7 1071,430.7 1072,430.7 1072,430.7 1073,430.7 1073,419.5 1074,419.5 1074,427.0 1075,427.0 1075,427.0 1076,427.0 1076,427.0 1077,427.0 1077,427.0 1078,427.0 1078,419.6 1079,419.6 1079,419.6 1080,419.6 1080,419.6 1081,419.6 1081,428.2 1082,428.2 1082,428.2 1083,428.2 1083,428.2 1084,428.2 1084,428.2 1085,428.2 1085,425.5 1086,425.5 1086,407.5 1087,407.5 1087,425.5 1088,425.5 1088,422.4 1089,422.4 1089,422.4 1090,422.4 1090,422.4 1091,422.4 1091,421.8 1092,421.8 1092,421.8 1093,421.8 1093,421.8 1094,421.8 1094,421.8 1095,421.8 1095,421.3 1096,421.3 1096,421.3 1097,421.3 1097,421.3 1098,421.3 1098,431.4 1099,431.4 1099,431.4 1100,431.4 1100,424.1 1101,424.1 1101,424.1 1102,424.1 1102,424.0 1103,424.0 1103,424.0 1104,424.0 1104,424.0 1105,424.0 1105,428.6 1106,428.6 1106,428.0 1107,428.0 1107,429.3 1108,429.3 1108,429.3 1109,429.3 1109,429.3 1110,429.3 1110,423.3 1111,423.3 1111,429.7 1112,429.7 1112,414.4 1113,414.4 1113,425.4 1114,425.4 1114,425.4 1115,425.4 1115,425.4 1116,425.4 1116,425.4 1117,425.4 1117,429.4 1118,429.4 1118,429.4 1119,429.4 1119,430.4 1120,430.4 1120,430.4 1121,430.4 1121,430.4 1122,430.4 1122,404.5 1123,404.5 1123,419.2 1124,419.2 1124,419.2 1125,419.2 1125,419.2 1126,419.2 1126,425.4 1127,425.4 1127,425.4 1128,425.4 1128,424.1 1129,424.1 1129,424.1 1130,424.1 1130,398.5 1131,398.5 1131,423.7 1132,423.7 1132,408.5 1133,408.5 1133,423.7 1134,423.7 1134,423.7 1135,423.7 1135,429.2 1136,429.2 1136,429.2 1137,429.2 1137,421.7 1138,421.7 1138,421.7 1139,421.7 1139,421.7 1140,421.7 1140,427.7 1141,427.7 1141,427.7 1142,427.7 1142,424.1 1143,424.1 1143,413.8 1144,413.8 1144,420.6 1145,420.6 1145,420.6 1146,420.6 1146,420.6 1147,420.6 1147,420.6 1148,420.6 1148,427.6 1149,427.6 1149,427.7 1150,427.7 1150,427.7 1151,427.7 1151,427.7 1152,427.7 1152,420.5 1153,420.5 1153,420.5 1154,420.5 1154,431.1 1155,431.1 1155,422.3 1156,422.3 1156,422.3 1157,422.3 1157,419.6 1158,419.6 1158,419.6 1159,419.6 1159,419.6 1160,419.6 1160,423.1 1161,423.1 1161,420.9 1162,420.9 1162,420.9 1163,420.9 1163,421.2 1164,421.2 1164,421.2 1165,421.2 1165,430.8 1166,430.8 1166,430.8 1167,430.8 1167,430.8 1168,430.8 1168,430.1 1169,430.1 1169,430.1 1170,430.1 1170,430.1 1171,430.1 1171,423.4 1172,423.4 1172,428.5 1173,428.5 1173,428.5 1174,428.5 1174,425.3 1175,425.3 1175,425.3 1176,425.3 1176,429.5 1177,429.5 1177,429.5 1178,429.5 1178,429.5 1179,429.5 1179,425.9 1180,425.9 1180,423.7 1181,423.7 1181,411.9 1182,411.9 1182,423.7 1183,423.7 1183,429.3 1184,429.3 1184,429.3 1185,429.3 1185,429.3 1186,429.3 1186,405.3 1187,405.3 1187,419.9 1188,419.9 1188,419.9 1189,419.9 1189,419.9 1190,419.9 1190,430.1 1191,430.1 1191,430.1 1192,430.1 1192,430.1 1193,430.1 1193,422.4 1194,422.4 1194,422.4 1195,422.4 1195,408.4 1196,408.4 1196,419.5 1197,419.5 1197,419.5 1198,419.5 1198,420.5 1199,420.5 1199,420.5 1200,420.5 1200,420.5 1201,420.5 1201,420.5 1202,420.5 1202,413.1 1203,413.1 1203,412.4 1204,412.4 1204,416.1 1205,416.1 1205,421.8 1206,421.8 1206,421.8 1207,421.8 1207,428.9 1208,428.9 1208,428.9 1209,428.9 1209,428.9 1210,428.9 1210,424.4 1211,424.4 1211,424.4 1212,424.4 1212,424.4 1213,424.4 1213,424.4 1214,424.4 1214,424.4 1215,424.4 1215,424.4 1216,424.4 1216,424.4 1217,424.4 1217,402.5 1218,402.5 1218,425.7 1219,425.7 1219,425.7 1220,425.7 1220,425.7 1221,425.7 1221,421.9 1222,421.9 1222,425.4 1223,425.4 1223,425.4 1224,425.4 1224,425.4 1225,425.4 1225,412.5 1226,412.5 1226,426.9 1227,426.9 1227,426.9 1228,426.9 1228,428.0 1229,428.0 1229,423.5 1230,423.5 1230,423.5 1231,423.5 1231,420.9 1232,420.9 1232,420.9 1233,420.9 1233,420.9 1234,420.9 1234,420.9 1235,420.9 1235,426.2 1236,426.2 1236,426.2 1237,426.2 1237,426.2 1238,426.2 1238,426.2 1239,426.2 1239,424.7 1240,424.7 1240,424.7 1241,424.7 1241,411.3 1242,411.3 1242,424.7 1243,424.7 1243,420.4 1244,420.4 1244,420.4 1245,420.4 1245,421.4 1246,421.4 1246,421.4 1247,421.4 1247,427.5 1248,427.5 1248,427.5 1249,427.5 1249,404.8 1250,404.8 1250,428.8 1251,428.8 1251,428.8 1252,428.8 1252,430.4 1253,430.4 1253,430.4 1254,430.4 1254,430.4 1255,430.4 1255,430.4 1256,430.4 1256,427.0 1257,427.0 1257,427.0 1258,427.0 1258,427.0 1259,427.0 1259,431.0 1260,431.0 1260,416.3 1261,416.3 1261,425.5 1262,425.5 1262,425.5 1263,425.5 1263,425.5 1264,425.5 1264,425.5 1265,425.5 1265,427.2 1266,427.2 1266,427.2 1267,427.2 1267,429.6 1268,429.6 1268,424.2 1269,424.2 1269,420.7 1270,420.7 1270,420.7 1271,420.7 1271,425.2 1272,425.2 1272,425.2 1273,425.2 1273,425.2 1274,425.2 1274,425.2 1275,425.2 1275,428.7 1276,428.7 1276,426.5 1277,426.5 1277,408.4 1278,408.4 1278,426.5 1279,426.5 1279,430.6 1280,430.6 1280,430.6 1281,430.6 1281,422.4 1282,422.4 1282,422.4 1283,422.4 1283,422.4 1284,422.4 1284,430.0 1285,430.0 1285,430.0 1286,430.0 1286,430.0 1287,430.0 1287,430.0 1288,430.0 1288,424.7 1289,424.7 1289,424.7 1290,424.7 1290,397.3 1291,397.3 1291,410.9 1292,410.9 1292,425.3 1293,425.3 1293,425.3 1294,425.3 1294,431.2 1295,431.2 1295,431.2 1296,431.2 1296,431.2 1297,431.2 1297,428.7 1298,428.7 1298,428.7 1299,428.7 1299,419.4 1300,419.4 1300,419.4 1301,419.4 1301,419.4 1302,419.4 1302,428.3 1303,428.3 1303,428.3 1304,428.3 1304,421.1 1305,421.1 1305,421.1 1306,421.1 1306,430.5 1307,430.5 1307,430.5 1308,430.5 1308,430.5 1309,430.5 1309,428.5 1310,428.5 1310,428.5 1311,428.5 1311,428.5 1312,428.5 1312,428.5 1313,428.5 1313,422.4 1314,422.4 1314,422.4 1315,422.4 1315,422.4 1316,422.4 1316,420.5 1317,420.5 1317,416.9 1318,416.9 1318,420.5 1319,420.5 1319,424.3 1320,424.3 1320,424.3 1321,424.3 1321,424.3 1322,424.3 1322,424.3 1323,424.3 1323,430.3 1324,430.3 1324,430.3 1325,430.3 1325,430.3 1326,430.3 1326,430.3 1327,430.3 1327,430.6 1328,430.6 1328,430.6 1329,430.6 1329,430.6 1330,430.6 1330,430.6 1331,430.6 1331,419.3 1332,419.3 1332,419.3 1333,419.3 1333,419.3 1334,419.3 1334,428.2 1335,428.2 1335,428.2 1336,428.2 1336,428.2 1337,428.2 1337,426.0 1338,426.0 1338,426.0 1339,426.0 1339,426.0 1340,426.0 1340,426.0 1341,426.0 1341,421.5 1342,421.5 1342,421.5 1343,421.5 1343,421.5 1344,421.5 1344,430.6 1345,430.6 1345,428.4 1346,428.4 1346,428.4 1347,428.4 1347,431.2 1348,431.2 1348,431.2 1349,431.2 1349,419.8 1350,419.8 1350,419.8 1351,419.8 1351,419.4 1352,419.4 1352,429.3 1353,429.3 1353,429.3 1354,429.3 1354,429.3 1355,429.3 1355,429.0 1356,429.0 1356,429.0 1357,429.0 1357,419.0 1358,419.0 1358,419.0 1359,419.0 1359,419.0 1360,419.0 1360,419.0 1361,419.0 1361,422.1 1362,422.1 1362,422.1 1363,422.1 1363,422.1 1364,422.1 1364,421.0 1365,421.0 1365,420.7 1366,420.7 1366,425.3 1367,425.3 1367,425.3 1368,425.3 1368,423.3 1369,423.3 1369,422.4 1370,422.4 1370,428.9 1371,428.9 1371,428.9 1372,428.9 1372,421.0 1373,421.0 1373,422.5 1374,422.5 1374,409.1 1375,409.1 1375,423.3 1376,423.3 1376,423.3 1377,423.3 1377,423.3 1378,423.3 1378,423.7 1379,423.7 1379,426.9 1380,426.9 1380,420.9 1381,420.9 1381,430.0 1382,430.0 1382,430.0 1383,430.0 1383,430.0 1384,430.0 1384,430.0 1385,430.0 1385,425.2 1386,425.2 1386,425.2 1387,425.2 1387,425.2 1388,425.2 1388,425.2 1389,425.2 1389,421.7 1390,421.7 1390,422.6 1391,422.6 1391,422.6 1392,422.6 1392,422.6 1393,422.6 1393,424.9 1394,424.9 1394,424.9 1395,424.9 1395,424.9 1396,424.9 1396,424.9 1397,424.9 1397,428.3 1398,428.3 1398,428.3 1399,428.3 1399,428.3 1400,428.3 1400,428.3 1401,428.3 1401,427.8 1402,427.8 1402,424.7 1403,424.7 1403,411.3 1404,411.3 1404,424.7 1405,424.7 1405,424.7 1406,424.7 1406,419.8 1407,419.8 1407,419.8 1408,419.8 1408,419.8 1409,419.8 1409,409.9 1410,409.9 1410,429.8 1411,429.8 1411,419.8 1412,419.8 1412,429.4 1413,429.4 1413,429.4 1414,429.4 1414,429.4 1415,429.4 1415,429.6 1416,429.6 1416,429.6 1417,429.6 1417,429.6 1418,429.6 1418,429.6 1419,429.6 1419,397.9 1420,397.9 1420,420.9 1421,420.9 1421,414.3 1422,414.3 1422,429.7 1423,429.7 1423,429.7 1424,429.7 1424,429.7 1425,429.7 1425,430.1 1426,430.1 1426,430.4 1427,430.4 1427,430.4 1428,430.4 1428,430.4 1429,430.4 1429,430.4 1430,430.4 1430,420.1 1431,420.1 1431,411.4 1432,411.4 1432,431.1 1433,431.1 1433,430.7 1434,430.7 1434,423.2 1435,423.2 1435,423.2 1436,423.2 1436,427.9 1437,427.9 1437,427.9 1438,427.9 1438,427.9 1439,427.9 1439,423.4 1440,423.4 1440,429.7 1441,429.7 1441,420.6 1442,420.6 1442,420.6 1443,420.6 1443,420.6 1444,420.6 1444,420.6 1445,420.6 1445,425.1 1446,425.1 1446,422.9 1447,422.9 1447,422.9 1448,422.9 1448,422.9 1449,422.9 1449,422.9 1450,422.9 1450,429.2 1451,429.2 1451,429.2 1452,429.2 1452,429.2 1453,429.2 1453,421.7 1454,421.7 1454,421.7 1455,421.7 1455,421.7 1456,421.7 1456,421.7 1457,421.7 1457,392.8 1458,392.8 1458,423.8 1459,423.8 1459,423.8 1460,423.8 1460,423.8 1461,423.8 1461,425.3 1462,425.3 1462,425.3 1463,425.3 1463,425.3 1464,425.3 1464,402.5 1465,402.5 1465,428.3 1466,428.3 1466,428.3 1467,428.3 1467,428.3 1468,428.3 1468,429.2 1469,429.2 1469,429.2 1470,429.2 1470,429.4 1471,429.4 1471,429.4 1472,429.4 1472,430.0 1473,430.0 1473,430.0 1474,430.0 1474,430.0 1475,430.0 1475,430.0 1476,430.0 1476,423.9 1477,423.9 1477,423.9 1478,423.9 1478,423.9 1479,423.9 1479,423.9 1480,423.9 1480,429.1 1481,429.1 1481,428.0 1482,428.0 1482,428.0 1483,428.0 1483,428.0 1484,428.0 1484,419.4 1485,419.4 1485,419.4 1486,419.4 1486,419.4 1487,419.4 1487,419.4 1488,419.4 1488,421.7 1489,421.7 1489,421.7 1490,421.7 1490,421.7 1491,421.7 1491,428.4 1492,428.4 1492,401.0 1493,401.0 1493,430.3 1494,430.3 1494,423.8 1495,423.8 1495,431.1 1496,431.1 1496,431.1 1497,431.1 1497,431.1 1498,431.1 1498,431.1 1499,431.1 1499,421.3 1500,421.3 1500,421.3 1501,421.3 1501,421.3 1502,421.3 1502,430.6 1503,430.6 1503,430.6 1504,430.6 1504,425.0 1505,425.0 1505,425.0 1506,425.0 1506,425.0 1507,425.0 1507,425.0 1508,425.0 1508,428.7 1509,428.7 1509,415.3 1510,415.3 1510,429.6 1511,429.6 1511,429.6 1512,429.6 1512,429.6 1513,429.6 1513,425.6 1514,425.6 1514,412.8 1515,412.8 1515,425.6 1516,425.6 1516,423.2 1517,423.2 1517,423.2 1518,423.2 1518,423.2 1519,423.2 1519,426.8 1520,426.8 1520,426.8 1521,426.8 1521,425.4 1522,425.4 1522,425.4 1523,425.4 1523,425.4 1524,425.4 1524,425.4 1525,425.4 1525,427.5 1526,427.5 1526,427.5 1527,427.5 1527,427.5 1528,427.5 1528,427.7 1529,427.7 1529,427.7 1530,427.7 1530,427.7 1531,427.7 1531,425.2 1532,425.2 1532,425.2 1533,425.2 1533,425.2 1534,425.2 1534,421.5 1535,421.5 1535,421.5 1536,421.5 1536,421.5 1537,421.5 1537,421.5 1538,421.5 1538,423.5 1539,423.5 1539,423.5 1540,423.5 1540,423.5 1541,423.5 1541,423.5 1542,423.5 1542,430.0 1543,430.0 1543,430.0 1544,430.0 1544,426.3 1545,426.3 1545,426.3 1546,426.3 1546,426.0 1547,426.0 1547,426.0 1548,426.0 1548,426.0 1549,426.0 1549,430.7 1550,430.7 1550,430.7 1551,430.7 1551,430.7 1552,430.7 1552,430.7 1553,430.7 1553,430.2 1554,430.2 1554,430.2 1555,430.2 1555,430.2 1556,430.2 1556,422.7 1557,422.7 1557,422.7 1558,422.7 1558,422.7 1559,422.7 1559,422.8 1560,422.8 1560,422.8 1561,422.8 1561,402.1 1562,402.1 1562,428.4 1563,428.4 1563,428.4 1564,428.4 1564,428.4 1565,428.4 1565,423.4 1566,423.4 1566,423.4 1567,423.4 1567,420.3 1568,420.3 1568,420.3 1569,420.3 1569,420.3 1570,420.3 1570,419.1 1571,419.1 1571,419.1 1572,419.1 1572,425.9 1573,425.9 1573,420.4 1574,420.4 1574,420.4 1575,420.4 1575,420.4 1576,420.4 1576,419.5 1577,419.5 1577,419.5 1578,419.5 1578,419.5 1579,419.5 1579,426.2 1580,426.2 1580,426.2 1581,426.2 1581,426.2 1582,426.2 1582,426.2 1583,426.2 1583,428.4 1584,428.4 1584,424.9 1585,424.9 1585,424.9 1586,424.9 1586,424.9 1587,424.9 1587,428.3 1588,428.3 1588,428.3 1589,428.3 1589,428.3 1590,428.3 1590,428.3 1591,428.3 1591,419.6 1592,419.6 1592,426.2 1593,426.2 1593,424.0 1594,424.0 1594,424.0 1595,424.0 1595,424.0 1596,424.0 1596,424.0 1597,424.0 1597,420.4 1598,420.4 1598,420.4 1599,420.4 1599,430.0 1600,430.0 1600,430.0 1601,430.0 1601,428.3 1602,428.3 1602,428.3 1603,428.3 1603,414.8 1604,414.8 1604,422.4 1605,422.4 1605,422.4 1606,422.4 1606,422.4 1607,422.4 1607,422.4 1608,422.4 1608,421.5 1609,421.5 1609,423.9 1610,423.9 1610,423.9 1611,423.9 1611,423.9 1612,423.9 1612,420.8 1613,420.8 1613,420.8 1614,420.8 1614,420.8 1615,420.8 1615,420.8 1616,420.8 1616,397.7 1617,397.7 1617,421.7 1618,421.7 1618,421.7 1619,421.7 1619,421.7 1620,421.7 1620,420.0 1621,420.0 1621,411.3 1622,411.3 1622,420.0 1623,420.0 1623,420.0 1624,420.0 1624,419.5 1625,419.5 1625,419.5 1626,419.5 1626,424.7 1627,424.7 1627,424.7 1628,424.7 1628,422.9 1629,422.9 1629,422.9 1630,422.9 1630,422.9 1631,422.9 1631,410.3 1632,410.3 1632,426.0 1633,426.0 1633,423.3 1634,423.3 1634,423.3 1635,423.3 1635,423.3 1636,423.3 1636,423.3 1637,423.3 1637,412.8 1638,412.8 1638,422.4 1639,422.4 1639,422.4 1640,422.4 1640,415.8 1641,415.8 1641,424.3 1642,424.3 1642,424.3 1643,424.3 1643,422.2 1644,422.2 1644,422.2 1645,422.2 1645,422.2 1646,422.2 1646,421.6 1647,421.6 1647,421.6 1648,421.6 1648,405.1 1649,405.1 1649,424.0 1650,424.0 1650,424.0 1651,424.0 1651,424.0 1652,424.0 1652,424.0 1653,424.0 1653,429.1 1654,429.1 1654,429.1 1655,429.1 1655,429.1 1656,429.1 1656,427.3 1657,427.3 1657,427.3 1658,427.3 1658,422.4 1659,422.4 1659,429.3 1660,429.3 1660,429.3 1661,429.3 1661,429.3 1662,429.3 1662,429.3 1663,429.3 1663,420.4 1664,420.4 1664,420.4 1665,420.4 1665,420.4 1666,420.4 1666,422.1 1667,422.1 1667,422.1 1668,422.1 1668,422.1 1669,422.1 1669,396.1 1670,396.1 1670,424.4 1671,424.4 1671,424.4 1672,424.4 1672,424.4 1673,424.4 1673,421.0 1674,421.0 1674,421.0 1675,421.0 1675,421.0 1676,421.0 1676,421.0 1677,421.0 1677,422.6 1678,422.6 1678,427.1 1679,427.1 1679,421.0 1680,421.0 1680,429.7 1681,429.7 1681,427.5 1682,427.5 1682,401.0 1683,401.0 1683,427.5 1684,427.5 1684,427.5 1685,427.5 1685,429.4 1686,429.4 1686,429.4 1687,429.4 1687,426.8 1688,426.8 1688,426.8 1689,426.8 1689,426.8 1690,426.8 1690,424.6 1691,424.6 1691,424.6 1692,424.6 1692,424.6 1693,424.6 1693,423.6 1694,423.6 1694,423.6 1695,423.6 1695,423.6 1696,423.6 1696,423.6 1697,423.6 1697,428.5 1698,428.5 1698,428.5 1699,428.5 1699,428.5 1700,428.5 1700,420.4 1701,420.4 1701,420.4 1702,420.4 1702,420.4 1703,420.4 1703,419.1 1704,419.1 1704,419.1 1705,419.1 1705,419.1 1706,419.1 1706,425.0 1707,425.0 1707,426.6 1708,426.6 1708,426.6 1709,426.6 1709,426.6 1710,426.6 1710,424.9 1711,424.9 1711,424.9 1712,424.9 1712,424.9 1713,424.9 1713,424.9 1714,424.9 1714,420.6 1715,420.6 1715,420.6 1716,420.6 1716,420.6 1717,420.6 1717,422.6 1718,422.6 1718,411.5 1719,411.5 1719,405.3 1720,405.3 1720,425.3 1721,425.3 1721,431.0 1722,431.0 1722,431.0 1723,431.0 1723,421.3 1724,421.3 1724,428.9 1725,428.9 1725,423.8 1726,423.8 1726,423.8 1727,423.8 1727,423.8 1728,423.8 1728,423.8 1729,423.8 1729,421.7 1730,421.7 1730,421.7 1731,421.7 1731,419.2 1732,419.2 1732,419.2 1733,419.2 1733,419.2 1734,419.2 1734,419.9 1735,419.9 1735,419.9 1736,419.9 1736,421.2 1737,421.2 1737,421.2 1738,421.2 1738,425.9 1739,425.9 1739,425.9 1740,425.9 1740,412.2 1741,412.2 1741,425.9 1742,425.9 1742,427.3 1743,427.3 1743,411.6 1744,411.6 1744,422.0 1745,422.0 1745,422.0 1746,422.0 1746,411.5 1747,411.5 1747,429.5 1748,429.5 1748,429.5 1749,429.5 1749,429.5 1750,429.5 1750,419.2 1751,419.2 1751,419.2 1752,419.2 1752,419.2 1753,419.2 1753,423.6 1754,423.6 1754,423.6 1755,423.6 1755,423.6 1756,423.6 1756,428.1 1757,428.1 1757,427.4 1758,427.4 1758,427.4 1759,427.4 1759,427.4 1760,427.4 1760,427.4 1761,427.4 1761,431.0 1762,431.0 1762,425.7 1763,425.7 1763,425.7 1764,425.7 1764,425.7 1765,425.7 1765,419.6 1766,419.6 1766,426.1 1767,426.1 1767,430.7 1768,430.7 1768,430.7 1769,430.7 1769,430.7 1770,430.7 1770,431.2 1771,431.2 1771,426.6 1772,426.6 1772,426.6 1773,426.6 1773,420.6 1774,420.6 1774,420.6 1775,420.6 1775,420.6 1776,420.6 1776,424.3 1777,424.3 1777,424.3 1778,424.3 1778,424.3 1779,424.3 1779,424.3 1780,424.3 1780,428.4 1781,428.4 1781,428.4 1782,428.4 1782,428.4 1783,428.4 1783,397.7 1784,397.7 1784,429.0 1785,429.0 1785,429.0 1786,429.0 1786,429.0 1787,429.0 1787,420.5 1788,420.5 1788,420.5 1789,420.5 1789,427.6 1790,427.6 1790,427.6 1791,427.6 1791,427.6 1792,427.6 1792,427.6 1793,427.6 1793,423.3 1794,423.3 1794,464.3" fill="#dbf4fc"/><polygon points="984,305.0 984,305.0 985,305.0 985,303.0 986,303.0 986,301.2 987,301.2 987,301.2 988,301.2 988,301.0 989,301.0 989,301.0 990,301.0 990,302.5 991,302.5 991,302.5 992,302.5 992,302.5 993,302.5 993,302.5 994,302.5 994,309.9 995,309.9 995,309.9 996,309.9 996,316.6 997,316.6 997,309.9 998,309.9 998,309.7 999,309.7 999,310.0 1000,310.0 1000,310.0 1001,310.0 1001,310.0 1002,310.0 1002,301.4 1003,301.4 1003,301.4 1004,301.4 1004,305.5 1005,305.5 1005,305.5 1006,305.5 1006,301.2 1007,301.2 1007,301.2 1008,301.2 1008,310.6 1009,310.6 1009,310.6 1010,310.6 1010,310.6 1011,310.6 1011,310.6 1012,310.6 1012,300.0 1013,300.0 1013,300.0 1014,300.0 1014,300.0 1015,300.0 1015,319.8 1016,319.8 1016,303.8 1017,303.8 1017,303.8 1018,303.8 1018,303.8 1019,303.8 1019,310.9 1020,310.9 1020,310.9 1021,310.9 1021,299.3 1022,299.3 1022,299.3 1023,299.3 1023,299.3 1024,299.3 1024,310.4 1025,310.4 1025,310.4 1026,310.4 1026,310.4 1027,310.4 1027,310.4 1028,310.4 1028,304.4 1029,304.4 1029,304.0 1030,304.0 1030,304.0 1031,304.0 1031,304.0 1032,304.0 1032,300.1 1033,300.1 1033,300.1 1034,300.1 1034,300.1 1035,300.1 1035,303.5 1036,303.5 1036,303.5 1037,303.5 1037,303.5 1038,303.5 1038,303.5 1039,303.5 1039,303.5 1040,303.5 1040,303.5 1041,303.5 1041,316.7 1042,316.7 1042,315.5 1043,315.5 1043,300.3 1044,300.3 1044,300.3 1045,300.3 1045,300.3 1046,300.3 1046,301.6 1047,301.6 1047,301.6 1048,301.6 1048,301.6 1049,301.6 1049,301.6 1050,301.6 1050,300.7 1051,300.7 1051,300.7 1052,300.7 1052,300.7 1053,300.7 1053,299.1 1054,299.1 1054,299.1 1055,299.1 1055,299.1 1056,299.1 1056,298.8 1057,298.8 1057,298.8 1058,298.8 1058,298.8 1059,298.8 1059,298.8 1060,298.8 1060,318.6 1061,318.6 1061,309.6 1062,309.6 1062,309.6 1063,309.6 1063,309.6 1064,309.6 1064,314.7 1065,314.7 1065,303.4 1066,303.4 1066,303.4 1067,303.4 1067,302.3 1068,302.3 1068,313.4 1069,313.4 1069,302.3 1070,302.3 1070,309.7 1071,309.7 1071,305.7 1072,305.7 1072,305.7 1073,305.7 1073,305.5 1074,305.5 1074,302.4 1075,302.4 1075,300.5 1076,300.5 1076,300.5 1077,300.5 1077,300.5 1078,300.5 1078,300.5 1079,300.5 1079,304.7 1080,304.7 1080,304.7 1081,304.7 1081,304.7 1082,304.7 1082,304.7 1083,304.7 1083,301.8 1084,301.8 1084,301.8 1085,301.8 1085,307.4 1086,307.4 1086,310.0 1087,310.0 1087,300.4 1088,300.4 1088,300.4 1089,300.4 1089,300.4 1090,300.4 1090,299.8 1091,299.8 1091,307.2 1092,307.2 1092,318.5 1093,318.5 1093,310.1 1094,310.1 1094,304.6 1095,304.6 1095,303.1 1096,303.1 1096,303.1 1097,303.1 1097,303.1 1098,303.1 1098,303.5 1099,303.5 1099,303.5 1100,303.5 1100,303.5 1101,303.5 1101,308.0 1102,308.0 1102,308.0 1103,308.0 1103,308.0 1104,308.0 1104,308.0 1105,308.0 1105,303.3 1106,303.3 1106,303.3 1107,303.3 1107,303.3 1108,303.3 1108,303.3 1109,303.3 1109,303.2 1110,303.2 1110,303.2 1111,303.2 1111,299.5 1112,299.5 1112,299.5 1113,299.5 1113,299.5 1114,299.5 1114,299.5 1115,299.5 1115,303.8 1116,303.8 1116,303.8 1117,303.8 1117,304.0 1118,304.0 1118,307.3 1119,307.3 1119,307.3 1120,307.3 1120,307.3 1121,307.3 1121,307.3 1122,307.3 1122,301.5 1123,301.5 1123,305.1 1124,305.1 1124,305.1 1125,305.1 1125,305.1 1126,305.1 1126,305.1 1127,305.1 1127,306.6 1128,306.6 1128,306.6 1129,306.6 1129,306.6 1130,306.6 1130,307.4 1131,307.4 1131,307.4 1132,307.4 1132,306.2 1133,306.2 1133,306.2 1134,306.2 1134,306.2 1135,306.2 1135,306.2 1136,306.2 1136,305.0 1137,305.0 1137,310.9 1138,310.9 1138,316.5 1139,316.5 1139,310.9 1140,310.9 1140,300.5 1141,300.5 1141,300.5 1142,300.5 1142,300.5 1143,300.5 1143,300.4 1144,300.4 1144,300.4 1145,300.4 1145,300.4 1146,300.4 1146,300.4 1147,300.4 1147,310.0 1148,310.0 1148,300.3 1149,300.3 1149,300.3 1150,300.3 1150,311.0 1151,311.0 1151,311.0 1152,311.0 1152,311.0 1153,311.0 1153,311.0 1154,311.0 1154,321.0 1155,321.0 1155,300.6 1156,300.6 1156,300.6 1157,300.6 1157,298.9 1158,298.9 1158,298.9 1159,298.9 1159,298.9 1160,298.9 1160,300.9 1161,300.9 1161,300.9 1162,300.9 1162,300.9 1163,300.9 1163,309.5 1164,309.5 1164,309.5 1165,309.5 1165,304.8 1166,304.8 1166,304.8 1167,304.8 1167,304.8 1168,304.8 1168,304.8 1169,304.8 1169,306.2 1170,306.2 1170,306.2 1171,306.2 1171,306.2 1172,306.2 1172,301.5 1173,301.5 1173,301.5 1174,301.5 1174,316.9 1175,316.9 1175,307.7 1176,307.7 1176,307.7 1177,307.7 1177,309.9 1178,309.9 1178,309.9 1179,309.9 1179,304.6 1180,304.6 1180,304.6 1181,304.6 1181,304.6 1182,304.6 1182,310.5 1183,310.5 1183,298.7 1184,298.7 1184,307.3 1185,307.3 1185,307.3 1186,307.3 1186,320.1 1187,320.1 1187,312.4 1188,312.4 1188,309.3 1189,309.3 1189,305.9 1190,305.9 1190,305.9 1191,305.9 1191,305.9 1192,305.9 1192,305.9 1193,305.9 1193,302.0 1194,302.0 1194,302.0 1195,302.0 1195,302.0 1196,302.0 1196,302.0 1197,302.0 1197,307.7 1198,307.7 1198,307.7 1199,307.7 1199,307.7 1200,307.7 1200,306.5 1201,306.5 1201,307.8 1202,307.8 1202,310.4 1203,310.4 1203,306.0 1204,306.0 1204,312.2 1205,312.2 1205,306.0 1206,306.0 1206,306.0 1207,306.0 1207,303.7 1208,303.7 1208,300.0 1209,300.0 1209,300.0 1210,300.0 1210,315.2 1211,315.2 1211,309.7 1212,309.7 1212,309.7 1213,309.7 1213,309.7 1214,309.7 1214,306.5 1215,306.5 1215,306.5 1216,306.5 1216,301.4 1217,301.4 1217,301.4 1218,301.4 1218,310.5 1219,310.5 1219,301.7 1220,301.7 1220,309.3 1221,309.3 1221,309.3 1222,309.3 1222,309.3 1223,309.3 1223,305.5 1224,305.5 1224,305.5 1225,305.5 1225,305.5 1226,305.5 1226,305.5 1227,305.5 1227,298.9 1228,298.9 1228,298.9 1229,298.9 1229,298.9 1230,298.9 1230,298.9 1231,298.9 1231,308.1 1232,308.1 1232,308.1 1233,308.1 1233,319.5 1234,319.5 1234,305.8 1235,305.8 1235,305.8 1236,305.8 1236,305.8 1237,305.8 1237,308.7 1238,308.7 1238,308.7 1239,308.7 1239,308.7 1240,308.7 1240,303.3 1241,303.3 1241,303.3 1242,303.3 1242,303.3 1243,303.3 1243,307.8 1244,307.8 1244,307.8 1245,307.8 1245,316.3 1246,316.3 1246,306.1 1247,306.1 1247,306.1 1248,306.1 1248,306.1 1249,306.1 1249,300.4 1250,300.4 1250,317.5 1251,317.5 1251,300.8 1252,300.8 1252,308.5 1253,308.5 1253,310.7 1254,310.7 1254,310.7 1255,310.7 1255,310.7 1256,310.7 1256,310.7 1257,310.7 1257,305.4 1258,305.4 1258,305.4 1259,305.4 1259,305.4 1260,305.4 1260,305.4 1261,305.4 1261,300.0 1262,300.0 1262,302.6 1263,302.6 1263,302.6 1264,302.6 1264,302.6 1265,302.6 1265,302.6 1266,302.6 1266,302.2 1267,302.2 1267,302.2 1268,302.2 1268,302.2 1269,302.2 1269,300.5 1270,300.5 1270,300.5 1271,300.5 1271,300.5 1272,300.5 1272,300.5 1273,300.5 1273,308.1 1274,308.1 1274,310.8 1275,310.8 1275,310.8 1276,310.8 1276,306.5 1277,306.5 1277,306.5 1278,306.5 1278,315.3 1279,315.3 1279,310.0 1280,310.0 1280,310.0 1281,310.0 1281,306.6 1282,306.6 1282,306.6 1283,306.6 1283,306.6 1284,306.6 1284,306.6 1285,306.6 1285,303.5 1286,303.5 1286,303.5 1287,303.5 1287,303.5 1288,303.5 1288,305.9 1289,305.9 1289,305.9 1290,305.9 1290,305.9 1291,305.9 1291,305.9 1292,305.9 1292,304.0 1293,304.0 1293,304.0 1294,304.0 1294,304.0 1295,304.0 1295,304.0 1296,304.0 1296,304.1 1297,304.1 1297,304.1 1298,304.1 1298,304.1 1299,304.1 1299,315.1 1300,315.1 1300,300.4 1301,300.4 1301,308.9 1302,308.9 1302,308.9 1303,308.9 1303,308.9 1304,308.9 1304,301.0 1305,301.0 1305,301.0 1306,301.0 1306,301.0 1307,301.0 1307,302.9 1308,302.9 1308,302.9 1309,302.9 1309,302.9 1310,302.9 1310,315.0 1311,315.0 1311,303.8 1312,303.8 1312,303.8 1313,303.8 1313,303.8 1314,303.8 1314,309.1 1315,309.1 1315,309.1 1316,309.1 1316,309.1 1317,309.1 1317,309.1 1318,309.1 1318,310.9 1319,310.9 1319,310.9 1320,310.9 1320,310.9 1321,310.9 1321,303.4 1322,303.4 1322,303.4 1323,303.4 1323,303.3 1324,303.3 1324,303.3 1325,303.3 1325,303.8 1326,303.8 1326,303.8 1327,303.8 1327,303.8 1328,303.8 1328,303.8 1329,303.8 1329,308.3 1330,308.3 1330,308.3 1331,308.3 1331,308.3 1332,308.3 1332,308.3 1333,308.3 1333,299.5 1334,299.5 1334,314.6 1335,314.6 1335,304.7 1336,304.7 1336,309.3 1337,309.3 1337,309.3 1338,309.3 1338,309.3 1339,309.3 1339,309.3 1340,309.3 1340,310.3 1341,310.3 1341,310.3 1342,310.3 1342,304.9 1343,304.9 1343,304.9 1344,304.9 1344,304.9 1345,304.9 1345,310.0 1346,310.0 1346,309.7 1347,309.7 1347,306.0 1348,306.0 1348,306.0 1349,306.0 1349,306.0 1350,306.0 1350,306.0 1351,306.0 1351,301.8 1352,301.8 1352,301.8 1353,301.8 1353,301.8 1354,301.8 1354,301.8 1355,301.8 1355,308.7 1356,308.7 1356,306.7 1357,306.7 1357,304.9 1358,304.9 1358,304.9 1359,304.9 1359,308.4 1360,308.4 1360,308.4 1361,308.4 1361,298.8 1362,298.8 1362,298.8 1363,298.8 1363,299.7 1364,299.7 1364,301.1 1365,301.1 1365,301.1 1366,301.1 1366,310.7 1367,310.7 1367,310.7 1368,310.7 1368,310.7 1369,310.7 1369,310.7 1370,310.7 1370,306.9 1371,306.9 1371,305.1 1372,305.1 1372,298.5 1373,298.5 1373,298.5 1374,298.5 1374,298.5 1375,298.5 1375,305.6 1376,305.6 1376,305.6 1377,305.6 1377,308.9 1378,308.9 1378,308.9 1379,308.9 1379,308.9 1380,308.9 1380,312.3 1381,312.3 1381,308.9 1382,308.9 1382,299.2 1383,299.2 1383,299.2 1384,299.2 1384,299.2 1385,299.2 1385,299.2 1386,299.2 1386,309.5 1387,309.5 1387,309.5 1388,309.5 1388,309.5 1389,309.5 1389,309.5 1390,309.5 1390,309.4 1391,309.4 1391,309.4 1392,309.4 1392,309.4 1393,309.4 1393,309.4 1394,309.4 1394,309.9 1395,309.9 1395,309.9 1396,309.9 1396,318.1 1397,318.1 1397,303.6 1398,303.6 1398,303.6 1399,303.6 1399,303.6 1400,303.6 1400,314.8 1401,314.8 1401,310.2 1402,310.2 1402,310.2 1403,310.2 1403,298.9 1404,298.9 1404,298.9 1405,298.9 1405,320.3 1406,320.3 1406,304.6 1407,304.6 1407,304.6 1408,304.6 1408,300.2 1409,300.2 1409,300.2 1410,300.2 1410,300.2 1411,300.2 1411,307.6 1412,307.6 1412,307.6 1413,307.6 1413,307.6 1414,307.6 1414,299.9 1415,299.9 1415,299.9 1416,299.9 1416,299.9 1417,299.9 1417,304.6 1418,304.6 1418,304.6 1419,304.6 1419,304.6 1420,304.6 1420,310.5 1421,310.5 1421,306.8 1422,306.8 1422,303.5 1423,303.5 1423,303.5 1424,303.5 1424,303.5 1425,303.5 1425,303.5 1426,303.5 1426,304.4 1427,304.4 1427,304.4 1428,304.4 1428,304.4 1429,304.4 1429,300.2 1430,300.2 1430,300.2 1431,300.2 1431,300.2 1432,300.2 1432,300.2 1433,300.2 1433,299.7 1434,299.7 1434,309.3 1435,309.3 1435,309.3 1436,309.3 1436,309.3 1437,309.3 1437,307.7 1438,307.7 1438,307.7 1439,307.7 1439,309.1 1440,309.1 1440,309.1 1441,309.1 1441,309.1 1442,309.1 1442,308.4 1443,308.4 1443,308.4 1444,308.4 1444,308.4 1445,308.4 1445,308.4 1446,308.4 1446,308.3 1447,308.3 1447,308.3 1448,308.3 1448,308.3 1449,308.3 1449,308.3 1450,308.3 1450,298.9 1451,298.9 1451,298.9 1452,298.9 1452,298.9 1453,298.9 1453,298.9 1454,298.9 1454,301.7 1455,301.7 1455,301.7 1456,301.7 1456,302.5 1457,302.5 1457,302.5 1458,302.5 1458,302.5 1459,302.5 1459,310.8 1460,310.8 1460,310.8 1461,310.8 1461,310.8 1462,310.8 1462,307.4 1463,307.4 1463,307.4 1464,307.4 1464,307.4 1465,307.4 1465,307.4 1466,307.4 1466,300.0 1467,300.0 1467,300.0 1468,300.0 1468,308.5 1469,308.5 1469,309.9 1470,309.9 1470,317.3 1471,317.3 1471,308.6 1472,308.6 1472,308.6 1473,308.6 1473,308.6 1474,308.6 1474,308.6 1475,308.6 1475,310.6 1476,310.6 1476,308.7 1477,308.7 1477,308.7 1478,308.7 1478,308.7 1479,308.7 1479,308.7 1480,308.7 1480,299.0 1481,299.0 1481,310.8 1482,310.8 1482,299.6 1483,299.6 1483,299.6 1484,299.6 1484,299.6 1485,299.6 1485,299.9 1486,299.9 1486,299.9 1487,299.9 1487,299.9 1488,299.9 1488,299.9 1489,299.9 1489,305.8 1490,305.8 1490,305.8 1491,305.8 1491,305.8 1492,305.8 1492,305.5 1493,305.5 1493,305.5 1494,305.5 1494,313.4 1495,313.4 1495,305.5 1496,305.5 1496,308.0 1497,308.0 1497,308.0 1498,308.0 1498,302.2 1499,302.2 1499,302.2 1500,302.2 1500,299.9 1501,299.9 1501,299.5 1502,299.5 1502,299.5 1503,299.5 1503,299.5 1504,299.5 1504,298.9 1505,298.9 1505,298.9 1506,298.9 1506,314.6 1507,314.6 1507,307.3 1508,307.3 1508,307.3 1509,307.3 1509,298.9 1510,298.9 1510,298.9 1511,298.9 1511,298.9 1512,298.9 1512,306.9 1513,306.9 1513,306.9 1514,306.9 1514,302.8 1515,302.8 1515,302.8 1516,302.8 1516,302.8 1517,302.8 1517,301.4 1518,301.4 1518,301.4 1519,301.4 1519,301.4 1520,301.4 1520,306.0 1521,306.0 1521,306.0 1522,306.0 1522,305.4 1523,305.4 1523,313.6 1524,313.6 1524,308.0 1525,308.0 1525,308.0 1526,308.0 1526,308.0 1527,308.0 1527,308.0 1528,308.0 1528,301.3 1529,301.3 1529,301.3 1530,301.3 1530,301.3 1531,301.3 1531,304.5 1532,304.5 1532,304.5 1533,304.5 1533,304.5 1534,304.5 1534,304.5 1535,304.5 1535,302.6 1536,302.6 1536,302.6 1537,302.6 1537,300.3 1538,300.3 1538,310.0 1539,310.0 1539,310.0 1540,310.0 1540,310.0 1541,310.0 1541,300.1 1542,300.1 1542,318.8 1543,318.8 1543,304.6 1544,304.6 1544,304.6 1545,304.6 1545,304.6 1546,304.6 1546,304.6 1547,304.6 1547,302.8 1548,302.8 1548,302.8 1549,302.8 1549,314.3 1550,314.3 1550,301.0 1551,301.0 1551,308.5 1552,308.5 1552,308.5 1553,308.5 1553,301.5 1554,301.5 1554,301.5 1555,301.5 1555,301.5 1556,301.5 1556,307.9 1557,307.9 1557,306.4 1558,306.4 1558,306.4 1559,306.4 1559,306.4 1560,306.4 1560,306.4 1561,306.4 1561,306.0 1562,306.0 1562,306.0 1563,306.0 1563,306.0 1564,306.0 1564,306.0 1565,306.0 1565,308.5 1566,308.5 1566,308.5 1567,308.5 1567,308.5 1568,308.5 1568,308.5 1569,308.5 1569,309.2 1570,309.2 1570,305.7 1571,305.7 1571,305.7 1572,305.7 1572,305.7 1573,305.7 1573,305.7 1574,305.7 1574,306.1 1575,306.1 1575,306.1 1576,306.1 1576,307.5 1577,307.5 1577,307.5 1578,307.5 1578,303.5 1579,303.5 1579,303.5 1580,303.5 1580,303.5 1581,303.5 1581,303.5 1582,303.5 1582,307.9 1583,307.9 1583,307.9 1584,307.9 1584,307.9 1585,307.9 1585,300.1 1586,300.1 1586,300.1 1587,300.1 1587,310.5 1588,310.5 1588,310.5 1589,310.5 1589,303.8 1590,303.8 1590,303.8 1591,303.8 1591,303.8 1592,303.8 1592,305.4 1593,305.4 1593,305.4 1594,305.4 1594,305.4 1595,305.4 1595,305.4 1596,305.4 1596,310.4 1597,310.4 1597,310.4 1598,310.4 1598,317.0 1599,317.0 1599,302.9 1600,302.9 1600,300.2 1601,300.2 1601,300.2 1602,300.2 1602,300.2 1603,300.2 1603,300.2 1604,300.2 1604,300.2 1605,300.2 1605,306.9 1606,306.9 1606,306.9 1607,306.9 1607,306.9 1608,306.9 1608,306.9 1609,306.9 1609,310.7 1610,310.7 1610,310.7 1611,310.7 1611,310.7 1612,310.7 1612,306.1 1613,306.1 1613,306.1 1614,306.1 1614,306.1 1615,306.1 1615,306.1 1616,306.1 1616,306.1 1617,306.1 1617,303.1 1618,303.1 1618,303.1 1619,303.1 1619,306.3 1620,306.3 1620,306.3 1621,306.3 1621,302.3 1622,302.3 1622,302.3 1623,302.3 1623,300.6 1624,300.6 1624,315.9 1625,315.9 1625,304.1 1626,304.1 1626,304.1 1627,304.1 1627,303.2 1628,303.2 1628,303.5 1629,303.5 1629,303.5 1630,303.5 1630,303.5 1631,303.5 1631,303.5 1632,303.5 1632,299.4 1633,299.4 1633,299.4 1634,299.4 1634,299.4 1635,299.4 1635,299.0 1636,299.0 1636,299.0 1637,299.0 1637,315.3 1638,315.3 1638,299.0 1639,299.0 1639,319.8 1640,319.8 1640,298.8 1641,298.8 1641,298.8 1642,298.8 1642,298.8 1643,298.8 1643,308.4 1644,308.4 1644,308.4 1645,308.4 1645,303.1 1646,303.1 1646,302.5 1647,302.5 1647,302.5 1648,302.5 1648,302.5 1649,302.5 1649,302.5 1650,302.5 1650,316.6 1651,316.6 1651,303.6 1652,303.6 1652,303.6 1653,303.6 1653,303.6 1654,303.6 1654,310.3 1655,310.3 1655,310.3 1656,310.3 1656,310.3 1657,310.3 1657,309.9 1658,309.9 1658,309.9 1659,309.9 1659,309.9 1660,309.9 1660,307.0 1661,307.0 1661,307.0 1662,307.0 1662,314.8 1663,314.8 1663,307.0 1664,307.0 1664,313.5 1665,313.5 1665,299.3 1666,299.3 1666,306.6 1667,306.6 1667,306.6 1668,306.6 1668,314.7 1669,314.7 1669,302.0 1670,302.0 1670,302.0 1671,302.0 1671,302.3 1672,302.3 1672,302.3 1673,302.3 1673,302.3 1674,302.3 1674,308.1 1675,308.1 1675,308.1 1676,308.1 1676,308.1 1677,308.1 1677,305.0 1678,305.0 1678,310.4 1679,310.4 1679,310.3 1680,310.3 1680,310.3 1681,310.3 1681,310.3 1682,310.3 1682,310.3 1683,310.3 1683,310.3 1684,310.3 1684,310.3 1685,310.3 1685,308.6 1686,308.6 1686,307.7 1687,307.7 1687,307.7 1688,307.7 1688,307.7 1689,307.7 1689,307.7 1690,307.7 1690,308.4 1691,308.4 1691,308.4 1692,308.4 1692,308.4 1693,308.4 1693,308.4 1694,308.4 1694,308.4 1695,308.4 1695,308.4 1696,308.4 1696,308.4 1697,308.4 1697,298.6 1698,298.6 1698,298.6 1699,298.6 1699,299.0 1700,299.0 1700,299.0 1701,299.0 1701,299.0 1702,299.0 1702,313.7 1703,313.7 1703,318.0 1704,318.0 1704,307.5 1705,307.5 1705,307.5 1706,307.5 1706,303.7 1707,303.7 1707,303.7 1708,303.7 1708,298.8 1709,298.8 1709,298.8 1710,298.8 1710,298.8 1711,298.8 1711,306.1 1712,306.1 1712,306.1 1713,306.1 1713,306.2 1714,306.2 1714,318.7 1715,318.7 1715,301.6 1716,301.6 1716,317.4 1717,317.4 1717,301.6 1718,301.6 1718,301.6 1719,301.6 1719,303.1 1720,303.1 1720,303.1 1721,303.1 1721,303.1 1722,303.1 1722,303.1 1723,303.1 1723,303.1 1724,303.1 1724,307.4 1725,307.4 1725,307.4 1726,307.4 1726,307.4 1727,307.4 1727,298.5 1728,298.5 1728,298.6 1729,298.6 1729,308.2 1730,308.2 1730,308.2 1731,308.2 1731,308.2 1732,308.2 1732,308.2 1733,308.2 1733,302.9 1734,302.9 1734,302.9 1735,302.9 1735,302.9 1736,302.9 1736,302.9 1737,302.9 1737,304.6 1738,304.6 1738,304.6 1739,304.6 1739,301.1 1740,301.1 1740,301.1 1741,301.1 1741,301.1 1742,301.1 1742,301.1 1743,301.1 1743,307.4 1744,307.4 1744,300.3 1745,300.3 1745,300.3 1746,300.3 1746,301.9 1747,301.9 1747,301.9 1748,301.9 1748,301.9 1749,301.9 1749,301.9 1750,301.9 1750,307.1 1751,307.1 1751,310.0 1752,310.0 1752,310.0 1753,310.0 1753,310.0 1754,310.0 1754,310.0 1755,310.0 1755,318.4 1756,318.4 1756,308.1 1757,308.1 1757,307.4 1758,307.4 1758,307.4 1759,307.4 1759,318.7 1760,318.7 1760,304.5 1761,304.5 1761,304.5 1762,304.5 1762,304.5 1763,304.5 1763,302.2 1764,302.2 1764,302.2 1765,302.2 1765,302.2 1766,302.2 1766,300.3 1767,300.3 1767,300.3 1768,300.3 1768,300.3 1769,300.3 1769,300.3 1770,300.3 1770,299.5 1771,299.5 1771,299.5 1772,299.5 1772,309.2 1773,309.2 1773,309.2 1774,309.2 1774,309.2 1775,309.2 1775,309.2 1776,309.2 1776,302.6 1777,302.6 1777,302.6 1778,302.6 1778,308.8 1779,308.8 1779,308.8 1780,308.8 1780,299.8 1781,299.8 1781,299.8 1782,299.8 1782,299.8 1783,299.8 1783,303.1 1784,303.1 1784,303.1 1785,303.1 1785,303.1 1786,303.1 1786,303.1 1787,303.1 1787,317.2 1788,317.2 1788,307.4 1789,307.4 1789,313.7 1790,313.7 1790,305.3 1791,305.3 1791,305.3 1792,305.3 1792,305.3 1793,305.3 1793,305.3 1794,305.3 1794,423.3 1793,423.3 1793,427.6 1792,427.6 1792,427.6 1791,427.6 1791,427.6 1790,427.6 1790,427.6 1789,427.6 1789,420.5 1788,420.5 1788,420.5 1787,420.5 1787,429.0 1786,429.0 1786,429.0 1785,429.0 1785,429.0 1784,429.0 1784,397.7 1783,397.7 1783,428.4 1782,428.4 1782,428.4 1781,428.4 1781,428.4 1780,428.4 1780,424.3 1779,424.3 1779,424.3 1778,424.3 1778,424.3 1777,424.3 1777,424.3 1776,424.3 1776,420.6 1775,420.6 1775,420.6 1774,420.6 1774,420.6 1773,420.6 1773,426.6 1772,426.6 1772,426.6 1771,426.6 1771,431.2 1770,431.2 1770,430.7 1769,430.7 1769,430.7 1768,430.7 1768,430.7 1767,430.7 1767,426.1 1766,426.1 1766,419.6 1765,419.6 1765,425.7 1764,425.7 1764,425.7 1763,425.7 1763,425.7 1762,425.7 1762,431.0 1761,431.0 1761,427.4 1760,427.4 1760,427.4 1759,427.4 1759,427.4 1758,427.4 1758,427.4 1757,427.4 1757,428.1 1756,428.1 1756,423.6 1755,423.6 1755,423.6 1754,423.6 1754,423.6 1753,423.6 1753,419.2 1752,419.2 1752,419.2 1751,419.2 1751,419.2 1750,419.2 1750,429.5 1749,429.5 1749,429.5 1748,429.5 1748,429.5 1747,429.5 1747,411.5 1746,411.5 1746,422.0 1745,422.0 1745,422.0 1744,422.0 1744,411.6 1743,411.6 1743,427.3 1742,427.3 1742,425.9 1741,425.9 1741,412.2 1740,412.2 1740,425.9 1739,425.9 1739,425.9 1738,425.9 1738,421.2 1737,421.2 1737,421.2 1736,421.2 1736,419.9 1735,419.9 1735,419.9 1734,419.9 1734,419.2 1733,419.2 1733,419.2 1732,419.2 1732,419.2 1731,419.2 1731,421.7 1730,421.7 1730,421.7 1729,421.7 1729,423.8 1728,423.8 1728,423.8 1727,423.8 1727,423.8 1726,423.8 1726,423.8 1725,423.8 1725,428.9 1724,428.9 1724,421.3 1723,421.3 1723,431.0 1722,431.0 1722,431.0 1721,431.0 1721,425.3 1720,425.3 1720,405.3 1719,405.3 1719,411.5 1718,411.5 1718,422.6 1717,422.6 1717,420.6 1716,420.6 1716,420.6 1715,420.6 1715,420.6 1714,420.6 1714,424.9 1713,424.9 1713,424.9 1712,424.9 1712,424.9 1711,424.9 1711,424.9 1710,424.9 1710,426.6 1709,426.6 1709,426.6 1708,426.6 1708,426.6 1707,426.6 1707,425.0 1706,425.0 1706,419.1 1705,419.1 1705,419.1 1704,419.1 1704,419.1 1703,419.1 1703,420.4 1702,420.4 1702,420.4 1701,420.4 1701,420.4 1700,420.4 1700,428.5 1699,428.5 1699,428.5 1698,428.5 1698,428.5 1697,428.5 1697,423.6 1696,423.6 1696,423.6 1695,423.6 1695,423.6 1694,423.6 1694,423.6 1693,423.6 1693,424.6 1692,424.6 1692,424.6 1691,424.6 1691,424.6 1690,424.6 1690,426.8 1689,426.8 1689,426.8 1688,426.8 1688,426.8 1687,426.8 1687,429.4 1686,429.4 1686,429.4 1685,429.4 1685,427.5 1684,427.5 1684,427.5 1683,427.5 1683,401.0 1682,401.0 1682,427.5 1681,427.5 1681,429.7 1680,429.7 1680,421.0 1679,421.0 1679,427.1 1678,427.1 1678,422.6 1677,422.6 1677,421.0 1676,421.0 1676,421.0 1675,421.0 1675,421.0 1674,421.0 1674,421.0 1673,421.0 1673,424.4 1672,424.4 1672,424.4 1671,424.4 1671,424.4 1670,424.4 1670,396.1 1669,396.1 1669,422.1 1668,422.1 1668,422.1 1667,422.1 1667,422.1 1666,422.1 1666,420.4 1665,420.4 1665,420.4 1664,420.4 1664,420.4 1663,420.4 1663,429.3 1662,429.3 1662,429.3 1661,429.3 1661,429.3 1660,429.3 1660,429.3 1659,429.3 1659,422.4 1658,422.4 1658,427.3 1657,427.3 1657,427.3 1656,427.3 1656,429.1 1655,429.1 1655,429.1 1654,429.1 1654,429.1 1653,429.1 1653,424.0 1652,424.0 1652,424.0 1651,424.0 1651,424.0 1650,424.0 1650,424.0 1649,424.0 1649,405.1 1648,405.1 1648,421.6 1647,421.6 1647,421.6 1646,421.6 1646,422.2 1645,422.2 1645,422.2 1644,422.2 1644,422.2 1643,422.2 1643,424.3 1642,424.3 1642,424.3 1641,424.3 1641,415.8 1640,415.8 1640,422.4 1639,422.4 1639,422.4 1638,422.4 1638,412.8 1637,412.8 1637,423.3 1636,423.3 1636,423.3 1635,423.3 1635,423.3 1634,423.3 1634,423.3 1633,423.3 1633,426.0 1632,426.0 1632,410.3 1631,410.3 1631,422.9 1630,422.9 1630,422.9 1629,422.9 1629,422.9 1628,422.9 1628,424.7 1627,424.7 1627,424.7 1626,424.7 1626,419.5 1625,419.5 1625,419.5 1624,419.5 1624,420.0 1623,420.0 1623,420.0 1622,420.0 1622,411.3 1621,411.3 1621,420.0 1620,420.0 1620,421.7 1619,421.7 1619,421.7 1618,421.7 1618,421.7 1617,421.7 1617,397.7 1616,397.7 1616,420.8 1615,420.8 1615,420.8 1614,420.8 1614,420.8 1613,420.8 1613,420.8 1612,420.8 1612,423.9 1611,423.9 1611,423.9 1610,423.9 1610,423.9 1609,423.9 1609,421.5 1608,421.5 1608,422.4 1607,422.4 1607,422.4 1606,422.4 1606,422.4 1605,422.4 1605,422.4 1604,422.4 1604,414.8 1603,414.8 1603,428.3 1602,428.3 1602,428.3 1601,428.3 1601,430.0 1600,430.0 1600,430.0 1599,430.0 1599,420.4 1598,420.4 1598,420.4 1597,420.4 1597,424.0 1596,424.0 1596,424.0 1595,424.0 1595,424.0 1594,424.0 1594,424.0 1593,424.0 1593,426.2 1592,426.2 1592,419.6 1591,419.6 1591,428.3 1590,428.3 1590,428.3 1589,428.3 1589,428.3 1588,428.3 1588,428.3 1587,428.3 1587,424.9 1586,424.9 1586,424.9 1585,424.9 1585,424.9 1584,424.9 1584,428.4 1583,428.4 1583,426.2 1582,426.2 1582,426.2 1581,426.2 1581,426.2 1580,426.2 1580,426.2 1579,426.2 1579,419.5 1578,419.5 1578,419.5 1577,419.5 1577,419.5 1576,419.5 1576,420.4 1575,420.4 1575,420.4 1574,420.4 1574,420.4 1573,420.4 1573,425.9 1572,425.9 1572,419.1 1571,419.1 1571,419.1 1570,419.1 1570,420.3 1569,420.3 1569,420.3 1568,420.3 1568,420.3 1567,420.3 1567,423.4 1566,423.4 1566,423.4 1565,423.4 1565,428.4 1564,428.4 1564,428.4 1563,428.4 1563,428.4 1562,428.4 1562,402.1 1561,402.1 1561,422.8 1560,422.8 1560,422.8 1559,422.8 1559,422.7 1558,422.7 1558,422.7 1557,422.7 1557,422.7 1556,422.7 1556,430.2 1555,430.2 1555,430.2 1554,430.2 1554,430.2 1553,430.2 1553,430.7 1552,430.7 1552,430.7 1551,430.7 1551,430.7 1550,430.7 1550,430.7 1549,430.7 1549,426.0 1548,426.0 1548,426.0 1547,426.0 1547,426.0 1546,426.0 1546,426.3 1545,426.3 1545,426.3 1544,426.3 1544,430.0 1543,430.0 1543,430.0 1542,430.0 1542,423.5 1541,423.5 1541,423.5 1540,423.5 1540,423.5 1539,423.5 1539,423.5 1538,423.5 1538,421.5 1537,421.5 1537,421.5 1536,421.5 1536,421.5 1535,421.5 1535,421.5 1534,421.5 1534,425.2 1533,425.2 1533,425.2 1532,425.2 1532,425.2 1531,425.2 1531,427.7 1530,427.7 1530,427.7 1529,427.7 1529,427.7 1528,427.7 1528,427.5 1527,427.5 1527,427.5 1526,427.5 1526,427.5 1525,427.5 1525,425.4 1524,425.4 1524,425.4 1523,425.4 1523,425.4 1522,425.4 1522,425.4 1521,425.4 1521,426.8 1520,426.8 1520,426.8 1519,426.8 1519,423.2 1518,423.2 1518,423.2 1517,423.2 1517,423.2 1516,423.2 1516,425.6 1515,425.6 1515,412.8 1514,412.8 1514,425.6 1513,425.6 1513,429.6 1512,429.6 1512,429.6 1511,429.6 1511,429.6 1510,429.6 1510,415.3 1509,415.3 1509,428.7 1508,428.7 1508,425.0 1507,425.0 1507,425.0 1506,425.0 1506,425.0 1505,425.0 1505,425.0 1504,425.0 1504,430.6 1503,430.6 1503,430.6 1502,430.6 1502,421.3 1501,421.3 1501,421.3 1500,421.3 1500,421.3 1499,421.3 1499,431.1 1498,431.1 1498,431.1 1497,431.1 1497,431.1 1496,431.1 1496,431.1 1495,431.1 1495,423.8 1494,423.8 1494,430.3 1493,430.3 1493,401.0 1492,401.0 1492,428.4 1491,428.4 1491,421.7 1490,421.7 1490,421.7 1489,421.7 1489,421.7 1488,421.7 1488,419.4 1487,419.4 1487,419.4 1486,419.4 1486,419.4 1485,419.4 1485,419.4 1484,419.4 1484,428.0 1483,428.0 1483,428.0 1482,428.0 1482,428.0 1481,428.0 1481,429.1 1480,429.1 1480,423.9 1479,423.9 1479,423.9 1478,423.9 1478,423.9 1477,423.9 1477,423.9 1476,423.9 1476,430.0 1475,430.0 1475,430.0 1474,430.0 1474,430.0 1473,430.0 1473,430.0 1472,430.0 1472,429.4 1471,429.4 1471,429.4 1470,429.4 1470,429.2 1469,429.2 1469,429.2 1468,429.2 1468,428.3 1467,428.3 1467,428.3 1466,428.3 1466,428.3 1465,428.3 1465,402.5 1464,402.5 1464,425.3 1463,425.3 1463,425.3 1462,425.3 1462,425.3 1461,425.3 1461,423.8 1460,423.8 1460,423.8 1459,423.8 1459,423.8 1458,423.8 1458,392.8 1457,392.8 1457,421.7 1456,421.7 1456,421.7 1455,421.7 1455,421.7 1454,421.7 1454,421.7 1453,421.7 1453,429.2 1452,429.2 1452,429.2 1451,429.2 1451,429.2 1450,429.2 1450,422.9 1449,422.9 1449,422.9 1448,422.9 1448,422.9 1447,422.9 1447,422.9 1446,422.9 1446,425.1 1445,425.1 1445,420.6 1444,420.6 1444,420.6 1443,420.6 1443,420.6 1442,420.6 1442,420.6 1441,420.6 1441,429.7 1440,429.7 1440,423.4 1439,423.4 1439,427.9 1438,427.9 1438,427.9 1437,427.9 1437,427.9 1436,427.9 1436,423.2 1435,423.2 1435,423.2 1434,423.2 1434,430.7 1433,430.7 1433,431.1 1432,431.1 1432,411.4 1431,411.4 1431,420.1 1430,420.1 1430,430.4 1429,430.4 1429,430.4 1428,430.4 1428,430.4 1427,430.4 1427,430.4 1426,430.4 1426,430.1 1425,430.1 1425,429.7 1424,429.7 1424,429.7 1423,429.7 1423,429.7 1422,429.7 1422,414.3 1421,414.3 1421,420.9 1420,420.9 1420,397.9 1419,397.9 1419,429.6 1418,429.6 1418,429.6 1417,429.6 1417,429.6 1416,429.6 1416,429.6 1415,429.6 1415,429.4 1414,429.4 1414,429.4 1413,429.4 1413,429.4 1412,429.4 1412,419.8 1411,419.8 1411,429.8 1410,429.8 1410,409.9 1409,409.9 1409,419.8 1408,419.8 1408,419.8 1407,419.8 1407,419.8 1406,419.8 1406,424.7 1405,424.7 1405,424.7 1404,424.7 1404,411.3 1403,411.3 1403,424.7 1402,424.7 1402,427.8 1401,427.8 1401,428.3 1400,428.3 1400,428.3 1399,428.3 1399,428.3 1398,428.3 1398,428.3 1397,428.3 1397,424.9 1396,424.9 1396,424.9 1395,424.9 1395,424.9 1394,424.9 1394,424.9 1393,424.9 1393,422.6 1392,422.6 1392,422.6 1391,422.6 1391,422.6 1390,422.6 1390,421.7 1389,421.7 1389,425.2 1388,425.2 1388,425.2 1387,425.2 1387,425.2 1386,425.2 1386,425.2 1385,425.2 1385,430.0 1384,430.0 1384,430.0 1383,430.0 1383,430.0 1382,430.0 1382,430.0 1381,430.0 1381,420.9 1380,420.9 1380,426.9 1379,426.9 1379,423.7 1378,423.7 1378,423.3 1377,423.3 1377,423.3 1376,423.3 1376,423.3 1375,423.3 1375,409.1 1374,409.1 1374,422.5 1373,422.5 1373,421.0 1372,421.0 1372,428.9 1371,428.9 1371,428.9 1370,428.9 1370,422.4 1369,422.4 1369,423.3 1368,423.3 1368,425.3 1367,425.3 1367,425.3 1366,425.3 1366,420.7 1365,420.7 1365,421.0 1364,421.0 1364,422.1 1363,422.1 1363,422.1 1362,422.1 1362,422.1 1361,422.1 1361,419.0 1360,419.0 1360,419.0 1359,419.0 1359,419.0 1358,419.0 1358,419.0 1357,419.0 1357,429.0 1356,429.0 1356,429.0 1355,429.0 1355,429.3 1354,429.3 1354,429.3 1353,429.3 1353,429.3 1352,429.3 1352,419.4 1351,419.4 1351,419.8 1350,419.8 1350,419.8 1349,419.8 1349,431.2 1348,431.2 1348,431.2 1347,431.2 1347,428.4 1346,428.4 1346,428.4 1345,428.4 1345,430.6 1344,430.6 1344,421.5 1343,421.5 1343,421.5 1342,421.5 1342,421.5 1341,421.5 1341,426.0 1340,426.0 1340,426.0 1339,426.0 1339,426.0 1338,426.0 1338,426.0 1337,426.0 1337,428.2 1336,428.2 1336,428.2 1335,428.2 1335,428.2 1334,428.2 1334,419.3 1333,419.3 1333,419.3 1332,419.3 1332,419.3 1331,419.3 1331,430.6 1330,430.6 1330,430.6 1329,430.6 1329,430.6 1328,430.6 1328,430.6 1327,430.6 1327,430.3 1326,430.3 1326,430.3 1325,430.3 1325,430.3 1324,430.3 1324,430.3 1323,430.3 1323,424.3 1322,424.3 1322,424.3 1321,424.3 1321,424.3 1320,424.3 1320,424.3 1319,424.3 1319,420.5 1318,420.5 1318,416.9 1317,416.9 1317,420.5 1316,420.5 1316,422.4 1315,422.4 1315,422.4 1314,422.4 1314,422.4 1313,422.4 1313,428.5 1312,428.5 1312,428.5 1311,428.5 1311,428.5 1310,428.5 1310,428.5 1309,428.5 1309,430.5 1308,430.5 1308,430.5 1307,430.5 1307,430.5 1306,430.5 1306,421.1 1305,421.1 1305,421.1 1304,421.1 1304,428.3 1303,428.3 1303,428.3 1302,428.3 1302,419.4 1301,419.4 1301,419.4 1300,419.4 1300,419.4 1299,419.4 1299,428.7 1298,428.7 1298,428.7 1297,428.7 1297,431.2 1296,431.2 1296,431.2 1295,431.2 1295,431.2 1294,431.2 1294,425.3 1293,425.3 1293,425.3 1292,425.3 1292,410.9 1291,410.9 1291,397.3 1290,397.3 1290,424.7 1289,424.7 1289,424.7 1288,424.7 1288,430.0 1287,430.0 1287,430.0 1286,430.0 1286,430.0 1285,430.0 1285,430.0 1284,430.0 1284,422.4 1283,422.4 1283,422.4 1282,422.4 1282,422.4 1281,422.4 1281,430.6 1280,430.6 1280,430.6 1279,430.6 1279,426.5 1278,426.5 1278,408.4 1277,408.4 1277,426.5 1276,426.5 1276,428.7 1275,428.7 1275,425.2 1274,425.2 1274,425.2 1273,425.2 1273,425.2 1272,425.2 1272,425.2 1271,425.2 1271,420.7 1270,420.7 1270,420.7 1269,420.7 1269,424.2 1268,424.2 1268,429.6 1267,429.6 1267,427.2 1266,427.2 1266,427.2 1265,427.2 1265,425.5 1264,425.5 1264,425.5 1263,425.5 1263,425.5 1262,425.5 1262,425.5 1261,425.5 1261,416.3 1260,416.3 1260,431.0 1259,431.0 1259,427.0 1258,427.0 1258,427.0 1257,427.0 1257,427.0 1256,427.0 1256,430.4 1255,430.4 1255,430.4 1254,430.4 1254,430.4 1253,430.4 1253,430.4 1252,430.4 1252,428.8 1251,428.8 1251,428.8 1250,428.8 1250,404.8 1249,404.8 1249,427.5 1248,427.5 1248,427.5 1247,427.5 1247,421.4 1246,421.4 1246,421.4 1245,421.4 1245,420.4 1244,420.4 1244,420.4 1243,420.4 1243,424.7 1242,424.7 1242,411.3 1241,411.3 1241,424.7 1240,424.7 1240,424.7 1239,424.7 1239,426.2 1238,426.2 1238,426.2 1237,426.2 1237,426.2 1236,426.2 1236,426.2 1235,426.2 1235,420.9 1234,420.9 1234,420.9 1233,420.9 1233,420.9 1232,420.9 1232,420.9 1231,420.9 1231,423.5 1230,423.5 1230,423.5 1229,423.5 1229,428.0 1228,428.0 1228,426.9 1227,426.9 1227,426.9 1226,426.9 1226,412.5 1225,412.5 1225,425.4 1224,425.4 1224,425.4 1223,425.4 1223,425.4 1222,425.4 1222,421.9 1221,421.9 1221,425.7 1220,425.7 1220,425.7 1219,425.7 1219,425.7 1218,425.7 1218,402.5 1217,402.5 1217,424.4 1216,424.4 1216,424.4 1215,424.4 1215,424.4 1214,424.4 1214,424.4 1213,424.4 1213,424.4 1212,424.4 1212,424.4 1211,424.4 1211,424.4 1210,424.4 1210,428.9 1209,428.9 1209,428.9 1208,428.9 1208,428.9 1207,428.9 1207,421.8 1206,421.8 1206,421.8 1205,421.8 1205,416.1 1204,416.1 1204,412.4 1203,412.4 1203,413.1 1202,413.1 1202,420.5 1201,420.5 1201,420.5 1200,420.5 1200,420.5 1199,420.5 1199,420.5 1198,420.5 1198,419.5 1197,419.5 1197,419.5 1196,419.5 1196,408.4 1195,408.4 1195,422.4 1194,422.4 1194,422.4 1193,422.4 1193,430.1 1192,430.1 1192,430.1 1191,430.1 1191,430.1 1190,430.1 1190,419.9 1189,419.9 1189,419.9 1188,419.9 1188,419.9 1187,419.9 1187,405.3 1186,405.3 1186,429.3 1185,429.3 1185,429.3 1184,429.3 1184,429.3 1183,429.3 1183,423.7 1182,423.7 1182,411.9 1181,411.9 1181,423.7 1180,423.7 1180,425.9 1179,425.9 1179,429.5 1178,429.5 1178,429.5 1177,429.5 1177,429.5 1176,429.5 1176,425.3 1175,425.3 1175,425.3 1174,425.3 1174,428.5 1173,428.5 1173,428.5 1172,428.5 1172,423.4 1171,423.4 1171,430.1 1170,430.1 1170,430.1 1169,430.1 1169,430.1 1168,430.1 1168,430.8 1167,430.8 1167,430.8 1166,430.8 1166,430.8 1165,430.8 1165,421.2 1164,421.2 1164,421.2 1163,421.2 1163,420.9 1162,420.9 1162,420.9 1161,420.9 1161,423.1 1160,423.1 1160,419.6 1159,419.6 1159,419.6 1158,419.6 1158,419.6 1157,419.6 1157,422.3 1156,422.3 1156,422.3 1155,422.3 1155,431.1 1154,431.1 1154,420.5 1153,420.5 1153,420.5 1152,420.5 1152,427.7 1151,427.7 1151,427.7 1150,427.7 1150,427.7 1149,427.7 1149,427.6 1148,427.6 1148,420.6 1147,420.6 1147,420.6 1146,420.6 1146,420.6 1145,420.6 1145,420.6 1144,420.6 1144,413.8 1143,413.8 1143,424.1 1142,424.1 1142,427.7 1141,427.7 1141,427.7 1140,427.7 1140,421.7 1139,421.7 1139,421.7 1138,421.7 1138,421.7 1137,421.7 1137,429.2 1136,429.2 1136,429.2 1135,429.2 1135,423.7 1134,423.7 1134,423.7 1133,423.7 1133,408.5 1132,408.5 1132,423.7 1131,423.7 1131,398.5 1130,398.5 1130,424.1 1129,424.1 1129,424.1 1128,424.1 1128,425.4 1127,425.4 1127,425.4 1126,425.4 1126,419.2 1125,419.2 1125,419.2 1124,419.2 1124,419.2 1123,419.2 1123,404.5 1122,404.5 1122,430.4 1121,430.4 1121,430.4 1120,430.4 1120,430.4 1119,430.4 1119,429.4 1118,429.4 1118,429.4 1117,429.4 1117,425.4 1116,425.4 1116,425.4 1115,425.4 1115,425.4 1114,425.4 1114,425.4 1113,425.4 1113,414.4 1112,414.4 1112,429.7 1111,429.7 1111,423.3 1110,423.3 1110,429.3 1109,429.3 1109,429.3 1108,429.3 1108,429.3 1107,429.3 1107,428.0 1106,428.0 1106,428.6 1105,428.6 1105,424.0 1104,424.0 1104,424.0 1103,424.0 1103,424.0 1102,424.0 1102,424.1 1101,424.1 1101,424.1 1100,424.1 1100,431.4 1099,431.4 1099,431.4 1098,431.4 1098,421.3 1097,421.3 1097,421.3 1096,421.3 1096,421.3 1095,421.3 1095,421.8 1094,421.8 1094,421.8 1093,421.8 1093,421.8 1092,421.8 1092,421.8 1091,421.8 1091,422.4 1090,422.4 1090,422.4 1089,422.4 1089,422.4 1088,422.4 1088,425.5 1087,425.5 1087,407.5 1086,407.5 1086,425.5 1085,425.5 1085,428.2 1084,428.2 1084,428.2 1083,428.2 1083,428.2 1082,428.2 1082,428.2 1081,428.2 1081,419.6 1080,419.6 1080,419.6 1079,419.6 1079,419.6 1078,419.6 1078,427.0 1077,427.0 1077,427.0 1076,427.0 1076,427.0 1075,427.0 1075,427.0 1074,427.0 1074,419.5 1073,419.5 1073,430.7 1072,430.7 1072,430.7 1071,430.7 1071,430.7 1070,430.7 1070,430.7 1069,430.7 1069,423.7 1068,423.7 1068,423.7 1067,423.7 1067,423.7 1066,423.7 1066,423.7 1065,423.7 1065,423.7 1064,423.7 1064,426.9 1063,426.9 1063,426.9 1062,426.9 1062,426.9 1061,426.9 1061,422.3 1060,422.3 1060,422.3 1059,422.3 1059,422.3 1058,422.3 1058,422.3 1057,422.3 1057,420.9 1056,420.9 1056,420.9 1055,420.9 1055,420.9 1054,420.9 1054,420.9 1053,420.9 1053,425.5 1052,425.5 1052,425.5 1051,425.5 1051,428.7 1050,428.7 1050,428.7 1049,428.7 1049,428.7 1048,428.7 1048,427.2 1047,427.2 1047,427.2 1046,427.2 1046,427.2 1045,427.2 1045,427.2 1044,427.2 1044,421.7 1043,421.7 1043,421.7 1042,421.7 1042,421.7 1041,421.7 1041,421.7 1040,421.7 1040,424.1 1039,424.1 1039,424.1 1038,424.1 1038,424.1 1037,424.1 1037,430.6 1036,430.6 1036,430.6 1035,430.6 1035,430.6 1034,430.6 1034,425.1 1033,425.1 1033,415.3 1032,415.3 1032,426.1 1031,426.1 1031,422.4 1030,422.4 1030,430.4 1029,430.4 1029,430.4 1028,430.4 1028,430.4 1027,430.4 1027,430.4 1026,430.4 1026,421.2 1025,421.2 1025,421.2 1024,421.2 1024,419.5 1023,419.5 1023,419.5 1022,419.5 1022,420.9 1021,420.9 1021,420.9 1020,420.9 1020,420.8 1019,420.8 1019,420.8 1018,420.8 1018,420.8 1017,420.8 1017,420.8 1016,420.8 1016,419.6 1015,419.6 1015,416.7 1014,416.7 1014,419.6 1013,419.6 1013,421.5 1012,421.5 1012,421.5 1011,421.5 1011,421.5 1010,421.5 1010,421.5 1009,421.5 1009,420.1 1008,420.1 1008,420.1 1007,420.1 1007,420.1 1006,420.1 1006,420.1 1005,420.1 1005,420.4 1004,420.4 1004,420.4 1003,420.4 1003,407.7 1002,407.7 1002,422.2 1001,422.2 1001,422.2 1000,422.2 1000,422.2 999,422.2 999,422.2 998,422.2 998,427.9 997,427.9 997,414.0 996,414.0 996,426.3 995,426.3 995,426.3 994,426.3 994,427.3 993,427.3 993,427.7 992,427.7 992,427.7 991,427.7 991,427.7 990,427.7 990,425.0 989,425.0 989,425.0 988,425.0 988,425.0 987,425.0 987,419.3 986,419.3 986,424.0 985,424.0 985,362.0 984,362.0" fill="#22a6d6"/><line x1="984.5" y1="239.9" x2="1794" y2="239.9" stroke="#f09a2c" stroke-width="2"/><line x1="984" y1="245.5" x2="1794" y2="245.5" stroke="rgba(0,0,0,0.2)" stroke-width="1" stroke-dasharray="1 2"/><line x1="984" y1="272.5" x2="1794" y2="272.5" stroke="rgba(0,0,0,0.2)" stroke-width="1" stroke-dasharray="1 2"/><line x1="984" y1="299.5" x2="1794" y2="299.5" stroke="rgba(0,0,0,0.2)" stroke-width="1" stroke-dasharray="1 2"/><line x1="984" y1="327.5" x2="1794" y2="327.5" stroke="rgba(0,0,0,0.2)" stroke-width="1" stroke-dasharray="1 2"/><line x1="984" y1="354.5" x2="1794" y2="354.5" stroke="rgba(0,0,0,0.2)" stroke-width="1" stroke-dasharray="1 2"/><line x1="984" y1="382.5" x2="1794" y2="382.5" stroke="rgba(0,0,0,0.2)" stroke-width="1" stroke-dasharray="1 2"/><line x1="984" y1="409.5" x2="1794" y2="409.5" stroke="rgba(0,0,0,0.2)" stroke-width="1" stroke-dasharray="1 2"/><line x1="984" y1="436.5" x2="1794" y2="436.5" stroke="rgba(0,0,0,0.2)" stroke-width="1" stroke-dasharray="1 2"/><line x1="986.5" y1="230" x2="986.5" y2="464" stroke="rgba(0,0,0,0.14)" stroke-width="1"/><line x1="1121.5" y1="230" x2="1121.5" y2="464" stroke="rgba(0,0,0,0.14)" stroke-width="1"/><line x1="1256.5" y1="230" x2="1256.5" y2="464" stroke="rgba(0,0,0,0.14)" stroke-width="1"/><line x1="1391.5" y1="230" x2="1391.5" y2="464" stroke="rgba(0,0,0,0.14)" stroke-width="1"/><line x1="1526.5" y1="230" x2="1526.5" y2="464" stroke="rgba(0,0,0,0.14)" stroke-width="1"/><line x1="1661.5" y1="230" x2="1661.5" y2="464" stroke="rgba(0,0,0,0.14)" stroke-width="1"/><line x1="983.5" y1="230" x2="983.5" y2="465" stroke="#4a4a4a" stroke-width="1.3"/><line x1="980" y1="464.5" x2="1794" y2="464.5" stroke="#4a4a4a" stroke-width="1.3"/><line x1="980" y1="245.5" x2="984" y2="245.5" stroke="#4a4a4a" stroke-width="1.2"/><line x1="980" y1="272.5" x2="984" y2="272.5" stroke="#4a4a4a" stroke-width="1.2"/><line x1="980" y1="299.5" x2="984" y2="299.5" stroke="#4a4a4a" stroke-width="1.2"/><line x1="980" y1="327.5" x2="984" y2="327.5" stroke="#4a4a4a" stroke-width="1.2"/><line x1="980" y1="354.5" x2="984" y2="354.5" stroke="#4a4a4a" stroke-width="1.2"/><line x1="980" y1="382.5" x2="984" y2="382.5" stroke="#4a4a4a" stroke-width="1.2"/><line x1="980" y1="409.5" x2="984" y2="409.5" stroke="#4a4a4a" stroke-width="1.2"/><line x1="980" y1="436.5" x2="984" y2="436.5" stroke="#4a4a4a" stroke-width="1.2"/><line x1="980" y1="464.5" x2="984" y2="464.5" stroke="#4a4a4a" stroke-width="1.2"/><line x1="986.5" y1="464" x2="986.5" y2="468" stroke="#4a4a4a" stroke-width="1.2"/><line x1="1121.5" y1="464" x2="1121.5" y2="468" stroke="#4a4a4a" stroke-width="1.2"/><line x1="1256.5" y1="464" x2="1256.5" y2="468" stroke="#4a4a4a" stroke-width="1.2"/><line x1="1391.5" y1="464" x2="1391.5" y2="468" stroke="#4a4a4a" stroke-width="1.2"/><line x1="1526.5" y1="464" x2="1526.5" y2="468" stroke="#4a4a4a" stroke-width="1.2"/><line x1="1661.5" y1="464" x2="1661.5" y2="468" stroke="#4a4a4a" stroke-width="1.2"/><defs><linearGradient id="g3" x1="0" y1="0" x2="0" y2="1"><stop offset="0" stop-color="#efefef"/><stop offset="1" stop-color="#f9f9f9"/></linearGradient></defs><rect x="65" y="600" width="825" height="235" fill="url(#g3)"/><polyline points="66.5,611.6 848,611.6 850,610.6 890,610.6" fill="none" stroke="#f09a2c" stroke-width="2"/><line x1="66.5" y1="834.5" x2="890" y2="834.5" stroke="#86d2ee" stroke-width="1"/><line x1="66" y1="610.5" x2="890" y2="610.5" stroke="rgba(0,0,0,0.2)" stroke-width="1" stroke-dasharray="1 2"/><line x1="66" y1="647.5" x2="890" y2="647.5" stroke="rgba(0,0,0,0.2)" stroke-width="1" stroke-dasharray="1 2"/><line x1="66" y1="685.5" x2="890" y2="685.5" stroke="rgba(0,0,0,0.2)" stroke-width="1" stroke-dasharray="1 2"/><line x1="66" y1="722.5" x2="890" y2="722.5" stroke="rgba(0,0,0,0.2)" stroke-width="1" stroke-dasharray="1 2"/><line x1="66" y1="760.5" x2="890" y2="760.5" stroke="rgba(0,0,0,0.2)" stroke-width="1" stroke-dasharray="1 2"/><line x1="66" y1="797.5" x2="890" y2="797.5" stroke="rgba(0,0,0,0.2)" stroke-width="1" stroke-dasharray="1 2"/><line x1="68.5" y1="600" x2="68.5" y2="835" stroke="rgba(0,0,0,0.14)" stroke-width="1"/><line x1="206.5" y1="600" x2="206.5" y2="835" stroke="rgba(0,0,0,0.14)" stroke-width="1"/><line x1="343.5" y1="600" x2="343.5" y2="835" stroke="rgba(0,0,0,0.14)" stroke-width="1"/><line x1="480.5" y1="600" x2="480.5" y2="835" stroke="rgba(0,0,0,0.14)" stroke-width="1"/><line x1="618.5" y1="600" x2="618.5" y2="835" stroke="rgba(0,0,0,0.14)" stroke-width="1"/><line x1="755.5" y1="600" x2="755.5" y2="835" stroke="rgba(0,0,0,0.14)" stroke-width="1"/><line x1="65.5" y1="600" x2="65.5" y2="836" stroke="#4a4a4a" stroke-width="1.3"/><line x1="62" y1="835.5" x2="890" y2="835.5" stroke="#4a4a4a" stroke-width="1.3"/><line x1="62" y1="610.5" x2="66" y2="610.5" stroke="#4a4a4a" stroke-width="1.2"/><line x1="62" y1="647.5" x2="66" y2="647.5" stroke="#4a4a4a" stroke-width="1.2"/><line x1="62" y1="685.5" x2="66" y2="685.5" stroke="#4a4a4a" stroke-width="1.2"/><line x1="62" y1="722.5" x2="66" y2="722.5" stroke="#4a4a4a" stroke-width="1.2"/><line x1="62" y1="760.5" x2="66" y2="760.5" stroke="#4a4a4a" stroke-width="1.2"/><line x1="62" y1="797.5" x2="66" y2="797.5" stroke="#4a4a4a" stroke-width="1.2"/><line x1="62" y1="835.5" x2="66" y2="835.5" stroke="#4a4a4a" stroke-width="1.2"/><line x1="68.5" y1="835" x2="68.5" y2="839" stroke="#4a4a4a" stroke-width="1.2"/><line x1="206.5" y1="835" x2="206.5" y2="839" stroke="#4a4a4a" stroke-width="1.2"/><line x1="343.5" y1="835" x2="343.5" y2="839" stroke="#4a4a4a" stroke-width="1.2"/><line x1="480.5" y1="835" x2="480.5" y2="839" stroke="#4a4a4a" stroke-width="1.2"/><line x1="618.5" y1="835" x2="618.5" y2="839" stroke="#4a4a4a" stroke-width="1.2"/><line x1="755.5" y1="835" x2="755.5" y2="839" stroke="#4a4a4a" stroke-width="1.2"/><defs><linearGradient id="g4" x1="0" y1="0" x2="0" y2="1"><stop offset="0" stop-color="#efefef"/><stop offset="1" stop-color="#f9f9f9"/></linearGradient></defs><rect x="951" y="600" width="843" height="235" fill="url(#g4)"/><polyline points="951.8,611.2 965.7,611.2 966.5,612.2 979.8,612.2 980.6,613.2 993.8,613.2 994.6,614.4 1008.7,614.4 1009.2,615.4 1011.5,615.4 1012.5,614.4 1019.4,614.4 1021.1,616.2 1036.0,616.2 1036.8,617.2 1047.5,617.2 1048.0,618.2 1050.3,618.2 1054.1,617.2 1064.0,617.2 1064.9,618.2 1078.9,618.2 1079.4,619.3 1081.7,619.3 1082.2,618.2 1092.1,618.2 1093.0,619.3 1102.9,619.3 1103.7,620.2 1106.2,620.2 1107.0,621.2 1116.9,621.2 1120.2,623.3 1133.5,623.3 1134.0,621.2 1135.5,621.2 1136.4,623.3 1139.8,623.3 1140.4,621.2 1142.1,621.2 1143.1,623.3 1147.5,623.3 1148.0,621.2 1150.0,621.2 1150.5,622.1 1152.0,622.1 1152.5,621.2 1155.0,621.2 1155.5,622.1 1157.4,622.1 1157.9,621.2 1159.9,621.2 1161.6,623.3 1163.2,623.3 1163.7,622.5 1164.9,622.5 1165.4,623.3 1166.9,623.3 1167.4,622.5 1168.5,622.5 1169.0,623.3 1171.5,623.3 1172.3,623.8 1174.8,623.8 1175.6,625.3 1187.2,625.3 1188.0,623.3 1194.6,623.3 1196.3,622.1 1242.6,622.1 1243.4,623.3 1250.0,623.3 1252.5,621.2 1257.4,621.2 1258.3,622.1 1271.5,622.1 1272.3,623.3 1278.9,623.3 1279.8,622.1 1299.6,622.1 1300.4,624.3 1313.6,624.3 1314.5,622.1 1327.7,622.1 1328.5,623.3 1334.3,623.3 1335.1,622.1 1365.7,622.1 1366.5,623.3 1391.3,623.3 1392.1,622.1 1397.9,622.1 1398.8,623.3 1411.2,623.3 1411.7,624.3 1412.6,624.3 1413.1,623.3 1417.8,623.3 1418.6,622.1 1433.5,622.1 1434.3,621.2 1444.2,621.2 1445.0,620.2 1454.1,620.2 1455.0,622.1 1457.4,622.1 1458.3,623.3 1462.4,623.3 1463.2,622.1 1481.4,622.1 1482.2,623.3 1496.3,623.3 1497.1,622.1 1497.9,622.1 1500.0,622.1 1509.9,622.1 1510.7,623.3 1524.0,623.3 1524.8,622.1 1538.0,622.1 1538.8,623.3 1550.1,623.3 1550.7,621.2 1552.6,621.2 1553.2,623.3 1558.2,623.3 1558.8,621.8 1560.3,621.8 1560.8,621.2 1562.0,621.2 1562.5,622.1 1563.6,622.1 1564.1,620.8 1565.3,620.8 1565.8,622.1 1567.1,622.1 1567.8,620.5 1569.4,620.5 1569.9,621.2 1571.1,621.2 1571.6,620.2 1572.7,620.2 1573.2,621.2 1574.4,621.2 1574.9,620.2 1576.0,620.2 1576.5,621.2 1577.7,621.2 1578.2,620.5 1581.0,620.5 1581.8,623.3 1585.6,623.3 1586.3,621.5 1587.6,621.5 1588.4,623.3 1590.6,623.3 1591.2,620.5 1592.6,620.5 1594.2,623.3 1612.4,623.3 1612.9,622.1 1623.1,622.1 1624.0,623.3 1628.1,623.3 1628.9,624.3 1636.4,624.3 1637.2,622.1 1664.0,622.1 1664.5,623.3 1665.8,623.3 1666.3,622.1 1680.2,622.1 1681.0,623.3 1720.7,623.3 1721.2,624.1 1722.0,624.1 1722.5,623.3 1728.1,623.3 1728.9,621.2 1743.0,621.2 1743.8,622.1 1747.9,622.1 1748.8,624.3 1753.7,624.3 1754.5,621.2 1759.5,621.2 1760.3,620.2 1768.6,620.2 1769.4,621.2 1771.9,621.2 1772.7,620.2 1786.0,620.2 1787.6,621.2 1794.0,621.2" fill="none" stroke="#f09a2c" stroke-width="2.1" stroke-linejoin="round"/><polyline points="951.8,711.2 965.7,711.2 966.5,712.2 979.8,712.2 980.6,713.2 993.8,713.2 994.6,714.4 1008.7,714.4 1009.2,715.4 1011.5,715.4 1012.5,714.4 1019.4,714.4 1021.1,716.2 1036.0,716.2 1036.8,717.2 1047.5,717.2 1048.0,718.2 1050.3,718.2 1054.1,717.2 1064.0,717.2 1064.9,718.2 1078.9,718.2 1079.4,719.3 1081.7,719.3 1082.2,718.2 1092.1,718.2 1093.0,719.3 1102.9,719.3 1103.7,720.2 1106.2,720.2 1107.0,721.2 1116.9,721.2 1120.2,723.3 1133.5,723.3 1134.0,721.2 1135.5,721.2 1136.4,723.3 1139.8,723.3 1140.4,721.2 1142.1,721.2 1143.1,723.3 1147.5,723.3 1148.0,721.2 1150.0,721.2 1150.5,722.1 1152.0,722.1 1152.5,721.2 1155.0,721.2 1155.5,722.1 1157.4,722.1 1157.9,721.2 1159.9,721.2 1161.6,723.3 1163.2,723.3 1163.7,722.5 1164.9,722.5 1165.4,723.3 1166.9,723.3 1167.4,722.5 1168.5,722.5 1169.0,723.3 1171.5,723.3 1172.3,723.8 1174.8,723.8 1175.6,725.3 1187.2,725.3 1188.0,723.3 1194.6,723.3 1196.3,722.1 1242.6,722.1 1243.4,723.3 1250.0,723.3 1252.5,721.2 1257.4,721.2 1258.3,722.1 1271.5,722.1 1272.3,723.3 1278.9,723.3 1279.8,722.1 1299.6,722.1 1300.4,724.3 1313.6,724.3 1314.5,722.1 1327.7,722.1 1328.5,723.3 1334.3,723.3 1335.1,722.1 1365.7,722.1 1366.5,723.3 1391.3,723.3 1392.1,722.1 1397.9,722.1 1398.8,723.3 1411.2,723.3 1411.7,724.3 1412.6,724.3 1413.1,723.3 1417.8,723.3 1418.6,722.1 1433.5,722.1 1434.3,721.2 1444.2,721.2 1445.0,720.2 1454.1,720.2 1455.0,722.1 1457.4,722.1 1458.3,723.3 1462.4,723.3 1463.2,722.1 1481.4,722.1 1482.2,723.3 1496.3,723.3 1497.1,722.1 1497.9,722.1 1500.0,722.1 1509.9,722.1 1510.7,723.3 1524.0,723.3 1524.8,722.1 1538.0,722.1 1538.8,723.3 1550.1,723.3 1550.7,721.2 1552.6,721.2 1553.2,723.3 1558.2,723.3 1558.8,721.8 1560.3,721.8 1560.8,721.2 1562.0,721.2 1562.5,722.1 1563.6,722.1 1564.1,720.8 1565.3,720.8 1565.8,722.1 1567.1,722.1 1567.8,720.5 1569.4,720.5 1569.9,721.2 1571.1,721.2 1571.6,720.2 1572.7,720.2 1573.2,721.2 1574.4,721.2 1574.9,720.2 1576.0,720.2 1576.5,721.2 1577.7,721.2 1578.2,720.5 1581.0,720.5 1581.8,723.3 1585.6,723.3 1586.3,721.5 1587.6,721.5 1588.4,723.3 1590.6,723.3 1591.2,720.5 1592.6,720.5 1594.2,723.3 1612.4,723.3 1612.9,722.1 1623.1,722.1 1624.0,723.3 1628.1,723.3 1628.9,724.3 1636.4,724.3 1637.2,722.1 1664.0,722.1 1664.5,723.3 1665.8,723.3 1666.3,722.1 1680.2,722.1 1681.0,723.3 1720.7,723.3 1721.2,724.1 1722.0,724.1 1722.5,723.3 1728.1,723.3 1728.9,721.2 1743.0,721.2 1743.8,722.1 1747.9,722.1 1748.8,724.3 1753.7,724.3 1754.5,721.2 1759.5,721.2 1760.3,720.2 1768.6,720.2 1769.4,721.2 1771.9,721.2 1772.7,720.2 1786.0,720.2 1787.6,721.2 1794.0,721.2" fill="none" stroke="#22a6d6" stroke-width="2.1" stroke-linejoin="round"/><line x1="952" y1="635.5" x2="1794" y2="635.5" stroke="rgba(0,0,0,0.2)" stroke-width="1" stroke-dasharray="1 2"/><line x1="952" y1="685.5" x2="1794" y2="685.5" stroke="rgba(0,0,0,0.2)" stroke-width="1" stroke-dasharray="1 2"/><line x1="952" y1="735.5" x2="1794" y2="735.5" stroke="rgba(0,0,0,0.2)" stroke-width="1" stroke-dasharray="1 2"/><line x1="952" y1="785.5" x2="1794" y2="785.5" stroke="rgba(0,0,0,0.2)" stroke-width="1" stroke-dasharray="1 2"/><line x1="954.5" y1="600" x2="954.5" y2="835" stroke="rgba(0,0,0,0.14)" stroke-width="1"/><line x1="1095.5" y1="600" x2="1095.5" y2="835" stroke="rgba(0,0,0,0.14)" stroke-width="1"/><line x1="1235.5" y1="600" x2="1235.5" y2="835" stroke="rgba(0,0,0,0.14)" stroke-width="1"/><line x1="1375.5" y1="600" x2="1375.5" y2="835" stroke="rgba(0,0,0,0.14)" stroke-width="1"/><line x1="1516.5" y1="600" x2="1516.5" y2="835" stroke="rgba(0,0,0,0.14)" stroke-width="1"/><line x1="1656.5" y1="600" x2="1656.5" y2="835" stroke="rgba(0,0,0,0.14)" stroke-width="1"/><line x1="951.5" y1="600" x2="951.5" y2="836" stroke="#4a4a4a" stroke-width="1.3"/><line x1="948" y1="835.5" x2="1794" y2="835.5" stroke="#4a4a4a" stroke-width="1.3"/><line x1="948" y1="635.5" x2="952" y2="635.5" stroke="#4a4a4a" stroke-width="1.2"/><line x1="948" y1="685.5" x2="952" y2="685.5" stroke="#4a4a4a" stroke-width="1.2"/><line x1="948" y1="735.5" x2="952" y2="735.5" stroke="#4a4a4a" stroke-width="1.2"/><line x1="948" y1="785.5" x2="952" y2="785.5" stroke="#4a4a4a" stroke-width="1.2"/><line x1="948" y1="835.5" x2="952" y2="835.5" stroke="#4a4a4a" stroke-width="1.2"/><line x1="948" y1="835.5" x2="952" y2="835.5" stroke="#4a4a4a" stroke-width="1.2"/><line x1="954.5" y1="835" x2="954.5" y2="839" stroke="#4a4a4a" stroke-width="1.2"/><line x1="1095.5" y1="835" x2="1095.5" y2="839" stroke="#4a4a4a" stroke-width="1.2"/><line x1="1235.5" y1="835" x2="1235.5" y2="839" stroke="#4a4a4a" stroke-width="1.2"/><line x1="1375.5" y1="835" x2="1375.5" y2="839" stroke="#4a4a4a" stroke-width="1.2"/><line x1="1516.5" y1="835" x2="1516.5" y2="839" stroke="#4a4a4a" stroke-width="1.2"/><line x1="1656.5" y1="835" x2="1656.5" y2="839" stroke="#4a4a4a" stroke-width="1.2"/></svg>
<div style="position:absolute;left:0px;top:0px;width:1815px;height:30px;background:#f3f4f6;border-bottom:1px solid #b6bbc1;"></div><div style="position:absolute;left:98px;top:0px;width:92px;height:31px;background:#ffffff;border-left:1px solid #b6bbc1;border-right:1px solid #b6bbc1;border-top-left-radius:1px;border-top-right-radius:1px;"></div><div class="t" style="left:5.8px;top:10.1px;font-size:15px;color:#545454;letter-spacing:0.486px;">Overview</div><div class="t" style="left:107.3px;top:9.6px;font-size:15px;color:#545454;letter-spacing:0.817px;">Monitor</div><div class="t" style="left:199.7px;top:10.1px;font-size:15px;color:#545454;letter-spacing:0.300px;">Threads</div><div class="t" style="left:292.3px;top:10.1px;font-size:15px;color:#545454;letter-spacing:0.267px;">Sampler</div><div class="t" style="left:384.0px;top:10.1px;font-size:15px;color:#545454;letter-spacing:0.300px;">MBeans</div><div class="t" style="left:476.8px;top:10.1px;font-size:15px;color:#545454;letter-spacing:0.120px;">JConsole Plugins</div><svg style="position:absolute;left:75px;top:9px" width="17" height="17" viewBox="0 0 17 17"><rect x="1.5" y="1.5" width="14" height="14" fill="#e4ebf3" stroke="#59636f" stroke-width="1.1"/><g fill="#aab4c0"><rect x="3.5" y="4" width="4.5" height="1"/><rect x="9" y="4" width="3.5" height="1"/><rect x="3.5" y="6" width="2" height="1"/><rect x="6.5" y="6" width="3" height="1"/><rect x="3.5" y="8" width="2.5" height="1"/><rect x="3.5" y="11" width="2.5" height="1"/></g><circle cx="12.5" cy="11.3" r="4.4" fill="#1d48a6"/><circle cx="12" cy="10" r="2.5" fill="#3a68c0" opacity="0.6"/><rect x="11.9" y="10.2" width="1.6" height="3.6" fill="#fff"/><rect x="11.2" y="13" width="3" height="0.9" fill="#fff"/><rect x="11.9" y="8.2" width="1.6" height="1.3" fill="#fff"/></svg><svg style="position:absolute;left:166px;top:8px" width="17" height="17" viewBox="0 0 17 17"><rect x="1.5" y="1.5" width="15" height="14.5" fill="#f4f8fc" stroke="#5a6470" stroke-width="1.2"/><g stroke="#c8d4e0" stroke-width="0.8"><line x1="4" y1="2" x2="4" y2="15"/><line x1="7" y1="2" x2="7" y2="15"/><line x1="10" y1="2" x2="10" y2="15"/><line x1="13" y1="2" x2="13" y2="15"/></g><path d="M2 15 L2 9 C3 8 4 11 5 10 C6 9 6.5 5 8 5 C9.5 5 9.5 10 11 9 C12 7 12 6 13.5 6.5 C15 8 15 10 16 10 L16 15Z" fill="#e05a5a"/><path d="M2 15 L2 13 C3 12 4 14 5 12.5 C6 11 7 13 8 11 C9 10 10 13 11 11.5 C12 10 13 12 14 11 C15 10.5 15.5 12 16 12 L16 15Z" fill="#2270c8"/><rect x="2" y="14" width="14" height="1.5" fill="#a8d0f4"/></svg><svg style="position:absolute;left:260px;top:10px" width="17" height="17" viewBox="0 0 17 17"><rect x="1.6" y="1.6" width="14.3" height="13.3" rx="1.5" fill="#fafcff" stroke="#5f6976" stroke-width="1.3"/><rect x="3" y="3.7" width="11.5" height="1.5" fill="#6d9ad0"/><rect x="3" y="7" width="11.5" height="2" rx="0.8" fill="#2f9a2f"/><rect x="7" y="7" width="1" height="2" fill="#e0a030"/><rect x="10" y="7" width="1.5" height="2" fill="#d84848"/><rect x="11.5" y="7" width="3" height="2" fill="#d8a030"/><rect x="3" y="10" width="11.5" height="2" rx="0.8" fill="#c8922a"/><rect x="3" y="10" width="2.5" height="2" fill="#666"/><rect x="8.5" y="10" width="3" height="2" fill="#2f9a2f"/></svg><svg style="position:absolute;left:353px;top:9px" width="17" height="17" viewBox="0 0 17 17"><circle cx="9.5" cy="7" r="5.2" fill="#dbeaf8" stroke="#4c5560" stroke-width="1.3"/><path d="M9.5 3.5 L10.5 8 L9.5 9 L8.5 8Z" fill="#e8702a"/><line x1="2" y1="13.5" x2="16" y2="13.5" stroke="#4c5560" stroke-width="1"/><g fill="#f8cf78" stroke="#8a5400" stroke-width="1.1"><rect x="1.6" y="11.6" width="3.3" height="4"/><rect x="7.7" y="11.6" width="3.3" height="4"/><rect x="13.7" y="11.6" width="3.3" height="4"/></g></svg><svg style="position:absolute;left:444px;top:9px" width="17" height="17" viewBox="0 0 17 17"><ellipse cx="8.5" cy="14" rx="7.6" ry="2.4" fill="#e4e8ee" stroke="#56606c" stroke-width="1.1"/><ellipse cx="5.8" cy="7.6" rx="3.8" ry="5.2" transform="rotate(-38 5.8 7.6)" fill="#c49a40" stroke="#8a6418" stroke-width="0.9"/><ellipse cx="11" cy="8" rx="4" ry="5.4" transform="rotate(-38 11 8)" fill="#d0a850" stroke="#8a6418" stroke-width="0.9"/><line x1="3.5" y1="5" x2="8" y2="10.5" stroke="#f0d890" stroke-width="0.9"/><line x1="8.5" y1="5" x2="13.5" y2="11" stroke="#f0d890" stroke-width="0.9"/></svg><svg style="position:absolute;left:598px;top:9px" width="17" height="17" viewBox="0 0 17 17"><rect x="1.6" y="1.6" width="14.8" height="11.8" rx="1.2" fill="#e8eaec" stroke="#5c6066" stroke-width="1.2"/><rect x="3.5" y="3.5" width="11" height="7.5" fill="#d8e6ee" stroke="#4c6470" stroke-width="1"/><path d="M5 8 L6.5 5.5 L8 8.5 L9.5 6 L11 8.5" fill="none" stroke="#5a84c0" stroke-width="0.9"/><rect x="4.5" y="13.5" width="9" height="2.3" rx="0.8" fill="#c8ccd0" stroke="#5c6066" stroke-width="1"/></svg><svg style="position:absolute;left:7px;top:38px" width="18" height="18" viewBox="0 0 18 18"><path d="M4.47 13.53 A6.4 6.4 0 0 1 3.97 12.96" stroke="rgb(226, 229, 233)" stroke-width="3.1" fill="none"/><path d="M4.03 13.03 A6.4 6.4 0 0 1 3.58 12.41" stroke="rgb(225, 228, 232)" stroke-width="3.1" fill="none"/><path d="M3.63 12.49 A6.4 6.4 0 0 1 3.26 11.83" stroke="rgb(223, 226, 230)" stroke-width="3.1" fill="none"/><path d="M3.30 11.91 A6.4 6.4 0 0 1 2.99 11.21" stroke="rgb(221, 224, 228)" stroke-width="3.1" fill="none"/><path d="M3.03 11.29 A6.4 6.4 0 0 1 2.80 10.57" stroke="rgb(218, 221, 225)" stroke-width="3.1" fill="none"/><path d="M2.82 10.66 A6.4 6.4 0 0 1 2.67 9.91" stroke="rgb(215, 218, 222)" stroke-width="3.1" fill="none"/><path d="M2.68 10.00 A6.4 6.4 0 0 1 2.60 9.25" stroke="rgb(211, 214, 219)" stroke-width="3.1" fill="none"/><path d="M2.61 9.33 A6.4 6.4 0 0 1 2.61 8.58" stroke="rgb(207, 210, 215)" stroke-width="3.1" fill="none"/><path d="M2.61 8.67 A6.4 6.4 0 0 1 2.69 7.91" stroke="rgb(202, 206, 211)" stroke-width="3.1" fill="none"/><path d="M2.68 8.00 A6.4 6.4 0 0 1 2.84 7.26" stroke="rgb(198, 201, 206)" stroke-width="3.1" fill="none"/><path d="M2.82 7.34 A6.4 6.4 0 0 1 3.06 6.62" stroke="rgb(192, 196, 201)" stroke-width="3.1" fill="none"/><path d="M3.03 6.71 A6.4 6.4 0 0 1 3.34 6.02" stroke="rgb(187, 190, 196)" stroke-width="3.1" fill="none"/><path d="M3.30 6.09 A6.4 6.4 0 0 1 3.68 5.44" stroke="rgb(181, 185, 191)" stroke-width="3.1" fill="none"/><path d="M3.63 5.51 A6.4 6.4 0 0 1 4.08 4.90" stroke="rgb(175, 179, 185)" stroke-width="3.1" fill="none"/><path d="M4.03 4.97 A6.4 6.4 0 0 1 4.54 4.41" stroke="rgb(169, 172, 179)" stroke-width="3.1" fill="none"/><path d="M4.47 4.47 A6.4 6.4 0 0 1 5.04 3.97" stroke="rgb(162, 166, 173)" stroke-width="3.1" fill="none"/><path d="M4.97 4.03 A6.4 6.4 0 0 1 5.59 3.58" stroke="rgb(155, 159, 166)" stroke-width="3.1" fill="none"/><path d="M5.51 3.63 A6.4 6.4 0 0 1 6.17 3.26" stroke="rgb(148, 152, 160)" stroke-width="3.1" fill="none"/><path d="M6.09 3.30 A6.4 6.4 0 0 1 6.79 2.99" stroke="rgb(141, 145, 153)" stroke-width="3.1" fill="none"/><path d="M6.71 3.03 A6.4 6.4 0 0 1 7.43 2.80" stroke="rgb(133, 137, 146)" stroke-width="3.1" fill="none"/><path d="M7.34 2.82 A6.4 6.4 0 0 1 8.09 2.67" stroke="rgb(125, 129, 138)" stroke-width="3.1" fill="none"/><path d="M8.00 2.68 A6.4 6.4 0 0 1 8.75 2.60" stroke="rgb(117, 121, 130)" stroke-width="3.1" fill="none"/><path d="M8.67 2.61 A6.4 6.4 0 0 1 9.42 2.61" stroke="rgb(109, 113, 123)" stroke-width="3.1" fill="none"/><path d="M9.33 2.61 A6.4 6.4 0 0 1 10.09 2.69" stroke="rgb(100, 104, 114)" stroke-width="3.1" fill="none"/><path d="M10.00 2.68 A6.4 6.4 0 0 1 10.74 2.84" stroke="rgb(91, 96, 106)" stroke-width="3.1" fill="none"/><path d="M10.66 2.82 A6.4 6.4 0 0 1 11.38 3.06" stroke="rgb(82, 87, 98)" stroke-width="3.1" fill="none"/><path d="M11.29 3.03 A6.4 6.4 0 0 1 11.98 3.34" stroke="rgb(73, 77, 89)" stroke-width="3.1" fill="none"/><path d="M11.91 3.30 A6.4 6.4 0 0 1 12.56 3.68" stroke="rgb(63, 68, 80)" stroke-width="3.1" fill="none"/><path d="M12.49 3.63 A6.4 6.4 0 0 1 13.10 4.08" stroke="rgb(53, 58, 71)" stroke-width="3.1" fill="none"/><path d="M13.03 4.03 A6.4 6.4 0 0 1 13.59 4.54" stroke="rgb(44, 49, 62)" stroke-width="3.1" fill="none"/><path d="M13.53 4.47 A6.4 6.4 0 0 1 14.03 5.04" stroke="rgb(226, 229, 233)" stroke-width="3.1" fill="none"/><path d="M13.97 4.97 A6.4 6.4 0 0 1 14.42 5.59" stroke="rgb(225, 228, 232)" stroke-width="3.1" fill="none"/><path d="M14.37 5.51 A6.4 6.4 0 0 1 14.74 6.17" stroke="rgb(223, 226, 230)" stroke-width="3.1" fill="none"/><path d="M14.70 6.09 A6.4 6.4 0 0 1 15.01 6.79" stroke="rgb(221, 224, 228)" stroke-width="3.1" fill="none"/><path d="M14.97 6.71 A6.4 6.4 0 0 1 15.20 7.43" stroke="rgb(218, 221, 225)" stroke-width="3.1" fill="none"/><path d="M15.18 7.34 A6.4 6.4 0 0 1 15.33 8.09" stroke="rgb(215, 218, 222)" stroke-width="3.1" fill="none"/><path d="M15.32 8.00 A6.4 6.4 0 0 1 15.40 8.75" stroke="rgb(211, 214, 219)" stroke-width="3.1" fill="none"/><path d="M15.39 8.67 A6.4 6.4 0 0 1 15.39 9.42" stroke="rgb(207, 210, 215)" stroke-width="3.1" fill="none"/><path d="M15.39 9.33 A6.4 6.4 0 0 1 15.31 10.09" stroke="rgb(202, 206, 211)" stroke-width="3.1" fill="none"/><path d="M15.32 10.00 A6.4 6.4 0 0 1 15.16 10.74" stroke="rgb(198, 201, 206)" stroke-width="3.1" fill="none"/><path d="M15.18 10.66 A6.4 6.4 0 0 1 14.94 11.38" stroke="rgb(192, 196, 201)" stroke-width="3.1" fill="none"/><path d="M14.97 11.29 A6.4 6.4 0 0 1 14.66 11.98" stroke="rgb(187, 190, 196)" stroke-width="3.1" fill="none"/><path d="M14.70 11.91 A6.4 6.4 0 0 1 14.32 12.56" stroke="rgb(181, 185, 191)" stroke-width="3.1" fill="none"/><path d="M14.37 12.49 A6.4 6.4 0 0 1 13.92 13.10" stroke="rgb(175, 179, 185)" stroke-width="3.1" fill="none"/><path d="M13.97 13.03 A6.4 6.4 0 0 1 13.46 13.59" stroke="rgb(169, 172, 179)" stroke-width="3.1" fill="none"/><path d="M13.53 13.53 A6.4 6.4 0 0 1 12.96 14.03" stroke="rgb(162, 166, 173)" stroke-width="3.1" fill="none"/><path d="M13.03 13.97 A6.4 6.4 0 0 1 12.41 14.42" stroke="rgb(155, 159, 166)" stroke-width="3.1" fill="none"/><path d="M12.49 14.37 A6.4 6.4 0 0 1 11.83 14.74" stroke="rgb(148, 152, 160)" stroke-width="3.1" fill="none"/><path d="M11.91 14.70 A6.4 6.4 0 0 1 11.21 15.01" stroke="rgb(141, 145, 153)" stroke-width="3.1" fill="none"/><path d="M11.29 14.97 A6.4 6.4 0 0 1 10.57 15.20" stroke="rgb(133, 137, 146)" stroke-width="3.1" fill="none"/><path d="M10.66 15.18 A6.4 6.4 0 0 1 9.91 15.33" stroke="rgb(125, 129, 138)" stroke-width="3.1" fill="none"/><path d="M10.00 15.32 A6.4 6.4 0 0 1 9.25 15.40" stroke="rgb(117, 121, 130)" stroke-width="3.1" fill="none"/><path d="M9.33 15.39 A6.4 6.4 0 0 1 8.58 15.39" stroke="rgb(109, 113, 123)" stroke-width="3.1" fill="none"/><path d="M8.67 15.39 A6.4 6.4 0 0 1 7.91 15.31" stroke="rgb(100, 104, 114)" stroke-width="3.1" fill="none"/><path d="M8.00 15.32 A6.4 6.4 0 0 1 7.26 15.16" stroke="rgb(91, 96, 106)" stroke-width="3.1" fill="none"/><path d="M7.34 15.18 A6.4 6.4 0 0 1 6.62 14.94" stroke="rgb(82, 87, 98)" stroke-width="3.1" fill="none"/><path d="M6.71 14.97 A6.4 6.4 0 0 1 6.02 14.66" stroke="rgb(73, 77, 89)" stroke-width="3.1" fill="none"/><path d="M6.09 14.70 A6.4 6.4 0 0 1 5.44 14.32" stroke="rgb(63, 68, 80)" stroke-width="3.1" fill="none"/><path d="M5.51 14.37 A6.4 6.4 0 0 1 4.90 13.92" stroke="rgb(53, 58, 71)" stroke-width="3.1" fill="none"/><path d="M4.97 13.97 A6.4 6.4 0 0 1 4.41 13.46" stroke="rgb(44, 49, 62)" stroke-width="3.1" fill="none"/></svg><div class="t" style="left:29.6px;top:38.6px;font-size:18.5px;font-weight:bold;color:#545454;letter-spacing:-0.377px;">localhost:9999</div><div class="t" style="left:157.6px;top:38.6px;font-size:18.5px;color:#545454;letter-spacing:-0.143px;">(pid 76)</div><div style="position:absolute;left:8px;top:63px;width:1801px;height:26px;background:#f3f3f3;border-top:1px solid #bdbdbd;border-left:1px solid #bdbdbd;border-right:1px solid #bdbdbd;box-sizing:border-box;"></div><div class="t" style="left:16.1px;top:68.0px;font-size:15px;color:#545454;letter-spacing:0.900px;">Monitor</div><svg style="position:absolute;left:1472px;top:69px" width="15" height="15" viewBox="0 0 15 15"><rect x="0" y="0" width="15" height="15" rx="3" fill="#9a4d87"/><path d="M3.2 7.3 L6.3 10.3 L12 4.8" fill="none" stroke="#fff" stroke-width="1.1"/></svg><div class="t" style="left:1494.1px;top:68.0px;font-size:15px;color:#545454;letter-spacing:-0.800px;">CPU</div><svg style="position:absolute;left:1538px;top:69px" width="15" height="15" viewBox="0 0 15 15"><rect x="0" y="0" width="15" height="15" rx="3" fill="#9a4d87"/><path d="M3.2 7.3 L6.3 10.3 L12 4.8" fill="none" stroke="#fff" stroke-width="1.1"/></svg><div class="t" style="left:1558.8px;top:68.0px;font-size:15px;color:#545454;letter-spacing:0.800px;">Memory</div><svg style="position:absolute;left:1632px;top:69px" width="15" height="15" viewBox="0 0 15 15"><rect x="0" y="0" width="15" height="15" rx="3" fill="#9a4d87"/><path d="M3.2 7.3 L6.3 10.3 L12 4.8" fill="none" stroke="#fff" stroke-width="1.1"/></svg><div class="t" style="left:1653.8px;top:68.0px;font-size:15px;color:#545454;letter-spacing:-0.200px;">Classes</div><svg style="position:absolute;left:1721.5px;top:69px" width="15" height="15" viewBox="0 0 15 15"><rect x="0" y="0" width="15" height="15" rx="3" fill="#9a4d87"/><path d="M3.2 7.3 L6.3 10.3 L12 4.8" fill="none" stroke="#fff" stroke-width="1.1"/></svg><div class="t" style="left:1742.7px;top:68.0px;font-size:15px;color:#545454;letter-spacing:0.350px;">Threads</div><div class="t" style="left:16.6px;top:105.2px;font-size:14.5px;font-weight:bold;color:#545454;">Uptime:</div><div class="t" style="left:76.0px;top:105.2px;font-size:14.5px;color:#545454;">11 hrs 08 min 05 sec</div><div style="position:absolute;left:1613px;top:104px;width:89px;height:26px;background:#fdfdfd;border:1px solid #b9bfc6;border-radius:3px;box-sizing:border-box;"></div><div class="t" style="left:1616.3px;top:109.0px;font-size:15px;color:#545454;letter-spacing:0.156px;">Perform GC</div><div style="position:absolute;left:1710px;top:104px;width:90px;height:26px;background:#fdfdfd;border:1px solid #b9bfc6;border-radius:3px;box-sizing:border-box;"></div><div class="t" style="left:1713.1px;top:109.0px;font-size:15px;color:#545454;letter-spacing:0.312px;">Heap Dump</div><div style="position:absolute;left:8px;top:145px;width:897px;height:26px;background:#f3f3f3;border-top:1px solid #bdbdbd;border-left:1px solid #bdbdbd;border-right:1px solid #bdbdbd;box-sizing:border-box;"></div><div class="t" style="left:16.7px;top:149.9px;font-size:15px;color:#545454;letter-spacing:-0.650px;">CPU</div><svg style="position:absolute;left:889.5px;top:152.5px" width="10" height="10" viewBox="0 0 10 10"><path d="M1.8 1.8 L8.2 8.2 M8.2 1.8 L1.8 8.2" stroke="#2a2a2a" stroke-width="1.45"/></svg><div style="position:absolute;left:911px;top:145px;width:898px;height:26px;background:#f3f3f3;border-top:1px solid #bdbdbd;border-left:1px solid #bdbdbd;border-right:1px solid #bdbdbd;box-sizing:border-box;border-bottom:1px solid #9a9a9a;"></div><div style="position:absolute;left:911px;top:145px;width:55px;height:26px;background:#eaeaea;border:1px solid #727272;border-bottom:none;box-sizing:border-box;"></div><div class="t" style="left:918.8px;top:149.9px;font-size:15px;color:#545454;letter-spacing:0.800px;">Heap</div><div class="t" style="left:972.7px;top:149.9px;font-size:15px;color:#545454;letter-spacing:0.625px;">Metaspace</div><svg style="position:absolute;left:1793.5px;top:152.5px" width="10" height="10" viewBox="0 0 10 10"><path d="M1.8 1.8 L8.2 8.2 M8.2 1.8 L1.8 8.2" stroke="#2a2a2a" stroke-width="1.45"/></svg><div style="position:absolute;left:8px;top:515px;width:897px;height:26px;background:#f3f3f3;border-top:1px solid #bdbdbd;border-left:1px solid #bdbdbd;border-right:1px solid #bdbdbd;box-sizing:border-box;"></div><div class="t" style="left:16.3px;top:520.0px;font-size:15px;color:#545454;letter-spacing:-0.167px;">Classes</div><svg style="position:absolute;left:889.5px;top:522.5px" width="10" height="10" viewBox="0 0 10 10"><path d="M1.8 1.8 L8.2 8.2 M8.2 1.8 L1.8 8.2" stroke="#2a2a2a" stroke-width="1.45"/></svg><div style="position:absolute;left:911px;top:515px;width:898px;height:26px;background:#f3f3f3;border-top:1px solid #bdbdbd;border-left:1px solid #bdbdbd;border-right:1px solid #bdbdbd;box-sizing:border-box;"></div><div class="t" style="left:920.2px;top:520.0px;font-size:15px;color:#545454;letter-spacing:0.283px;">Threads</div><svg style="position:absolute;left:1793.5px;top:522.5px" width="10" height="10" viewBox="0 0 10 10"><path d="M1.8 1.8 L8.2 8.2 M8.2 1.8 L1.8 8.2" stroke="#2a2a2a" stroke-width="1.45"/></svg><div class="t" style="left:21.0px;top:184.7px;font-size:14px;color:#545454;letter-spacing:0.327px"><b>CPU usage:</b> 24.5%</div><div class="t" style="left:457.0px;top:184.7px;font-size:14px;color:#545454;letter-spacing:0.450px"><b>GC activity:</b> 0.0%</div><div class="t" style="left:924.1px;top:184.7px;font-size:14px;color:#545454;letter-spacing:0.235px"><b>Size:</b> 2,147,483,648 B</div><div class="t" style="left:923.6px;top:205.6px;font-size:14px;color:#545454;letter-spacing:0.253px"><b>Max:</b> 2,147,483,648 B</div><div class="t" style="left:1359.7px;top:184.7px;font-size:14px;color:#545454;letter-spacing:0.225px"><b>Used:</b> 1,349,084,160 B</div><div class="t" style="left:21.2px;top:555.1px;font-size:14px;color:#545454;letter-spacing:0.416px"><b>Total loaded:</b> 30,029</div><div class="t" style="left:21.2px;top:576.1px;font-size:14px;color:#545454;letter-spacing:0.487px"><b>Total unloaded:</b> 0</div><div class="t" style="left:457.6px;top:555.1px;font-size:14px;color:#545454;letter-spacing:0.367px"><b>Shared loaded:</b> 0</div><div class="t" style="left:457.6px;top:576.1px;font-size:14px;color:#545454;letter-spacing:0.388px"><b>Shared unloaded:</b> 0</div><div class="t" style="left:923.6px;top:555.1px;font-size:14px;color:#545454;letter-spacing:0.450px"><b>Live:</b> 215</div><div class="t" style="left:923.6px;top:576.1px;font-size:14px;color:#545454;letter-spacing:0.508px"><b>Live peak:</b> 273</div><div class="t" style="left:1359.6px;top:555.1px;font-size:14px;color:#545454;letter-spacing:0.510px"><b>Daemon:</b> 115</div><div class="t" style="left:1360.4px;top:576.1px;font-size:14px;color:#545454;letter-spacing:0.568px"><b>Total started:</b> 1,347</div><div class="t" style="left:53.4px;top:213.8px;font-size:12px;color:#545454;transform:translateX(-100%);letter-spacing:0.250px;">100%</div><div class="t" style="left:53.4px;top:262.8px;font-size:12px;color:#545454;transform:translateX(-100%);letter-spacing:0.250px;">80%</div><div class="t" style="left:53.4px;top:311.8px;font-size:12px;color:#545454;transform:translateX(-100%);letter-spacing:0.250px;">60%</div><div class="t" style="left:53.4px;top:360.8px;font-size:12px;color:#545454;transform:translateX(-100%);letter-spacing:0.250px;">40%</div><div class="t" style="left:53.4px;top:409.8px;font-size:12px;color:#545454;transform:translateX(-100%);letter-spacing:0.250px;">20%</div><div class="t" style="left:53.4px;top:458.8px;font-size:12px;color:#545454;transform:translateX(-100%);letter-spacing:0.250px;">0%</div><div class="t" style="left:62.5px;top:470.6px;font-size:12px;color:#545454;transform:translateX(-50%);letter-spacing:0.250px;">12:00 PM</div><div class="t" style="left:201.5px;top:470.6px;font-size:12px;color:#545454;transform:translateX(-50%);letter-spacing:0.250px;">12:10 PM</div><div class="t" style="left:339.5px;top:470.6px;font-size:12px;color:#545454;transform:translateX(-50%);letter-spacing:0.250px;">12:20 PM</div><div class="t" style="left:477.5px;top:470.6px;font-size:12px;color:#545454;transform:translateX(-50%);letter-spacing:0.250px;">12:30 PM</div><div class="t" style="left:616.5px;top:470.6px;font-size:12px;color:#545454;transform:translateX(-50%);letter-spacing:0.250px;">12:40 PM</div><div class="t" style="left:754.5px;top:470.6px;font-size:12px;color:#545454;transform:translateX(-50%);letter-spacing:0.250px;">12:50 PM</div><div style="position:absolute;left:712px;top:492.0px;width:10px;height:10px;background:#f09a2c;border:1px solid #3a3a3a;box-sizing:border-box;"></div><div class="t" style="left:725.7px;top:489.6px;font-size:14px;color:#545454;letter-spacing:0.287px;">CPU usage</div><div style="position:absolute;left:810px;top:492.0px;width:10px;height:10px;background:#22a6d6;border:1px solid #3a3a3a;box-sizing:border-box;"></div><div class="t" style="left:823.8px;top:489.6px;font-size:14px;color:#545454;letter-spacing:0.330px;">GC activity</div><div class="t" style="left:978.3px;top:239.8px;font-size:12px;color:#545454;transform:translateX(-100%);letter-spacing:0.250px;">2,000 MB</div><div class="t" style="left:978.3px;top:266.8px;font-size:12px;color:#545454;transform:translateX(-100%);letter-spacing:0.250px;">1,750 MB</div><div class="t" style="left:978.3px;top:293.8px;font-size:12px;color:#545454;transform:translateX(-100%);letter-spacing:0.250px;">1,500 MB</div><div class="t" style="left:978.3px;top:321.8px;font-size:12px;color:#545454;transform:translateX(-100%);letter-spacing:0.250px;">1,250 MB</div><div class="t" style="left:978.3px;top:348.8px;font-size:12px;color:#545454;transform:translateX(-100%);letter-spacing:0.250px;">1,000 MB</div><div class="t" style="left:978.3px;top:376.8px;font-size:12px;color:#545454;transform:translateX(-100%);letter-spacing:0.250px;">750 MB</div><div class="t" style="left:978.3px;top:403.8px;font-size:12px;color:#545454;transform:translateX(-100%);letter-spacing:0.250px;">500 MB</div><div class="t" style="left:978.3px;top:430.8px;font-size:12px;color:#545454;transform:translateX(-100%);letter-spacing:0.250px;">250 MB</div><div class="t" style="left:978.3px;top:458.8px;font-size:12px;color:#545454;transform:translateX(-100%);letter-spacing:0.250px;">0 MB</div><div class="t" style="left:986.5px;top:470.6px;font-size:12px;color:#545454;transform:translateX(-50%);letter-spacing:0.250px;">12:00 PM</div><div class="t" style="left:1121.5px;top:470.6px;font-size:12px;color:#545454;transform:translateX(-50%);letter-spacing:0.250px;">12:10 PM</div><div class="t" style="left:1256.5px;top:470.6px;font-size:12px;color:#545454;transform:translateX(-50%);letter-spacing:0.250px;">12:20 PM</div><div class="t" style="left:1391.5px;top:470.6px;font-size:12px;color:#545454;transform:translateX(-50%);letter-spacing:0.250px;">12:30 PM</div><div class="t" style="left:1526.5px;top:470.6px;font-size:12px;color:#545454;transform:translateX(-50%);letter-spacing:0.250px;">12:40 PM</div><div class="t" style="left:1661.5px;top:470.6px;font-size:12px;color:#545454;transform:translateX(-50%);letter-spacing:0.250px;">12:50 PM</div><div style="position:absolute;left:1622px;top:492.0px;width:10px;height:10px;background:#f09a2c;border:1px solid #3a3a3a;box-sizing:border-box;"></div><div class="t" style="left:1635.6px;top:489.6px;font-size:14px;color:#545454;letter-spacing:0.500px;">Heap size</div><div style="position:absolute;left:1712px;top:492.0px;width:10px;height:10px;background:#22a6d6;border:1px solid #3a3a3a;box-sizing:border-box;"></div><div class="t" style="left:1725.7px;top:489.6px;font-size:14px;color:#545454;letter-spacing:0.650px;">Used heap</div><div class="t" style="left:59.8px;top:604.8px;font-size:12px;color:#545454;transform:translateX(-100%);letter-spacing:0.250px;">30,000</div><div class="t" style="left:59.8px;top:641.8px;font-size:12px;color:#545454;transform:translateX(-100%);letter-spacing:0.250px;">25,000</div><div class="t" style="left:59.8px;top:679.8px;font-size:12px;color:#545454;transform:translateX(-100%);letter-spacing:0.250px;">20,000</div><div class="t" style="left:59.8px;top:716.8px;font-size:12px;color:#545454;transform:translateX(-100%);letter-spacing:0.250px;">15,000</div><div class="t" style="left:59.8px;top:754.8px;font-size:12px;color:#545454;transform:translateX(-100%);letter-spacing:0.250px;">10,000</div><div class="t" style="left:59.8px;top:791.8px;font-size:12px;color:#545454;transform:translateX(-100%);letter-spacing:0.250px;">5,000</div><div class="t" style="left:59.8px;top:829.8px;font-size:12px;color:#545454;transform:translateX(-100%);letter-spacing:0.250px;">0</div><div class="t" style="left:68.5px;top:841.6px;font-size:12px;color:#545454;transform:translateX(-50%);letter-spacing:0.250px;">12:00 PM</div><div class="t" style="left:206.5px;top:841.6px;font-size:12px;color:#545454;transform:translateX(-50%);letter-spacing:0.250px;">12:10 PM</div><div class="t" style="left:343.5px;top:841.6px;font-size:12px;color:#545454;transform:translateX(-50%);letter-spacing:0.250px;">12:20 PM</div><div class="t" style="left:480.5px;top:841.6px;font-size:12px;color:#545454;transform:translateX(-50%);letter-spacing:0.250px;">12:30 PM</div><div class="t" style="left:618.5px;top:841.6px;font-size:12px;color:#545454;transform:translateX(-50%);letter-spacing:0.250px;">12:40 PM</div><div class="t" style="left:755.5px;top:841.6px;font-size:12px;color:#545454;transform:translateX(-50%);letter-spacing:0.250px;">12:50 PM</div><div style="position:absolute;left:564px;top:863.0px;width:10px;height:10px;background:#f09a2c;border:1px solid #3a3a3a;box-sizing:border-box;"></div><div class="t" style="left:577.5px;top:860.6px;font-size:14px;color:#545454;letter-spacing:0.732px;">Total loaded classes</div><div style="position:absolute;left:728px;top:863.0px;width:10px;height:10px;background:#22a6d6;border:1px solid #3a3a3a;box-sizing:border-box;"></div><div class="t" style="left:742.1px;top:860.6px;font-size:14px;color:#545454;letter-spacing:0.540px;">Shared loaded classes</div><div class="t" style="left:945.3px;top:629.8px;font-size:12px;color:#545454;transform:translateX(-100%);letter-spacing:0.250px;">200</div><div class="t" style="left:945.3px;top:679.8px;font-size:12px;color:#545454;transform:translateX(-100%);letter-spacing:0.250px;">150</div><div class="t" style="left:945.3px;top:729.8px;font-size:12px;color:#545454;transform:translateX(-100%);letter-spacing:0.250px;">100</div><div class="t" style="left:945.3px;top:779.8px;font-size:12px;color:#545454;transform:translateX(-100%);letter-spacing:0.250px;">50</div><div class="t" style="left:945.3px;top:829.8px;font-size:12px;color:#545454;transform:translateX(-100%);letter-spacing:0.250px;">0</div><div class="t" style="left:945.3px;top:829.8px;font-size:12px;color:#545454;transform:translateX(-100%);letter-spacing:0.250px;">0</div><div class="t" style="left:954.5px;top:841.6px;font-size:12px;color:#545454;transform:translateX(-50%);letter-spacing:0.250px;">12:00 PM</div><div class="t" style="left:1095.5px;top:841.6px;font-size:12px;color:#545454;transform:translateX(-50%);letter-spacing:0.250px;">12:10 PM</div><div class="t" style="left:1235.5px;top:841.6px;font-size:12px;color:#545454;transform:translateX(-50%);letter-spacing:0.250px;">12:20 PM</div><div class="t" style="left:1375.5px;top:841.6px;font-size:12px;color:#545454;transform:translateX(-50%);letter-spacing:0.250px;">12:30 PM</div><div class="t" style="left:1516.5px;top:841.6px;font-size:12px;color:#545454;transform:translateX(-50%);letter-spacing:0.250px;">12:40 PM</div><div class="t" style="left:1656.5px;top:841.6px;font-size:12px;color:#545454;transform:translateX(-50%);letter-spacing:0.250px;">12:50 PM</div><div style="position:absolute;left:1561px;top:863.0px;width:10px;height:10px;background:#f09a2c;border:1px solid #3a3a3a;box-sizing:border-box;"></div><div class="t" style="left:1573.9px;top:860.6px;font-size:14px;color:#545454;letter-spacing:0.791px;">Live threads</div><div style="position:absolute;left:1669.5px;top:863.0px;width:10px;height:10px;background:#22a6d6;border:1px solid #3a3a3a;box-sizing:border-box;"></div><div class="t" style="left:1681.9px;top:860.6px;font-size:14px;color:#545454;letter-spacing:1.062px;">Daemon threads</div>
<div style="position:absolute;left:639px;top:219px;width:120px;height:58px;background:rgba(70,70,70,0.93);"></div>
<div class="t" style="left:643.6px;top:226.6px;font-size:12px;color:#f4f4f4;letter-spacing:0.330px">12:51:08 PM</div><div class="t" style="left:643.9px;top:242.4px;font-size:12px;color:#f4f4f4;letter-spacing:0.463px">CPU usage</div><div class="t" style="left:719.2px;top:242.4px;font-size:12px;color:#f4f4f4;letter-spacing:0.125px">29.2%</div><div class="t" style="left:643.9px;top:258.8px;font-size:12px;color:#f4f4f4;letter-spacing:0.790px">GC activity</div><div class="t" style="left:726.2px;top:258.8px;font-size:12px;color:#f4f4f4;letter-spacing:0.067px">0.0%</div>
</body></html>
